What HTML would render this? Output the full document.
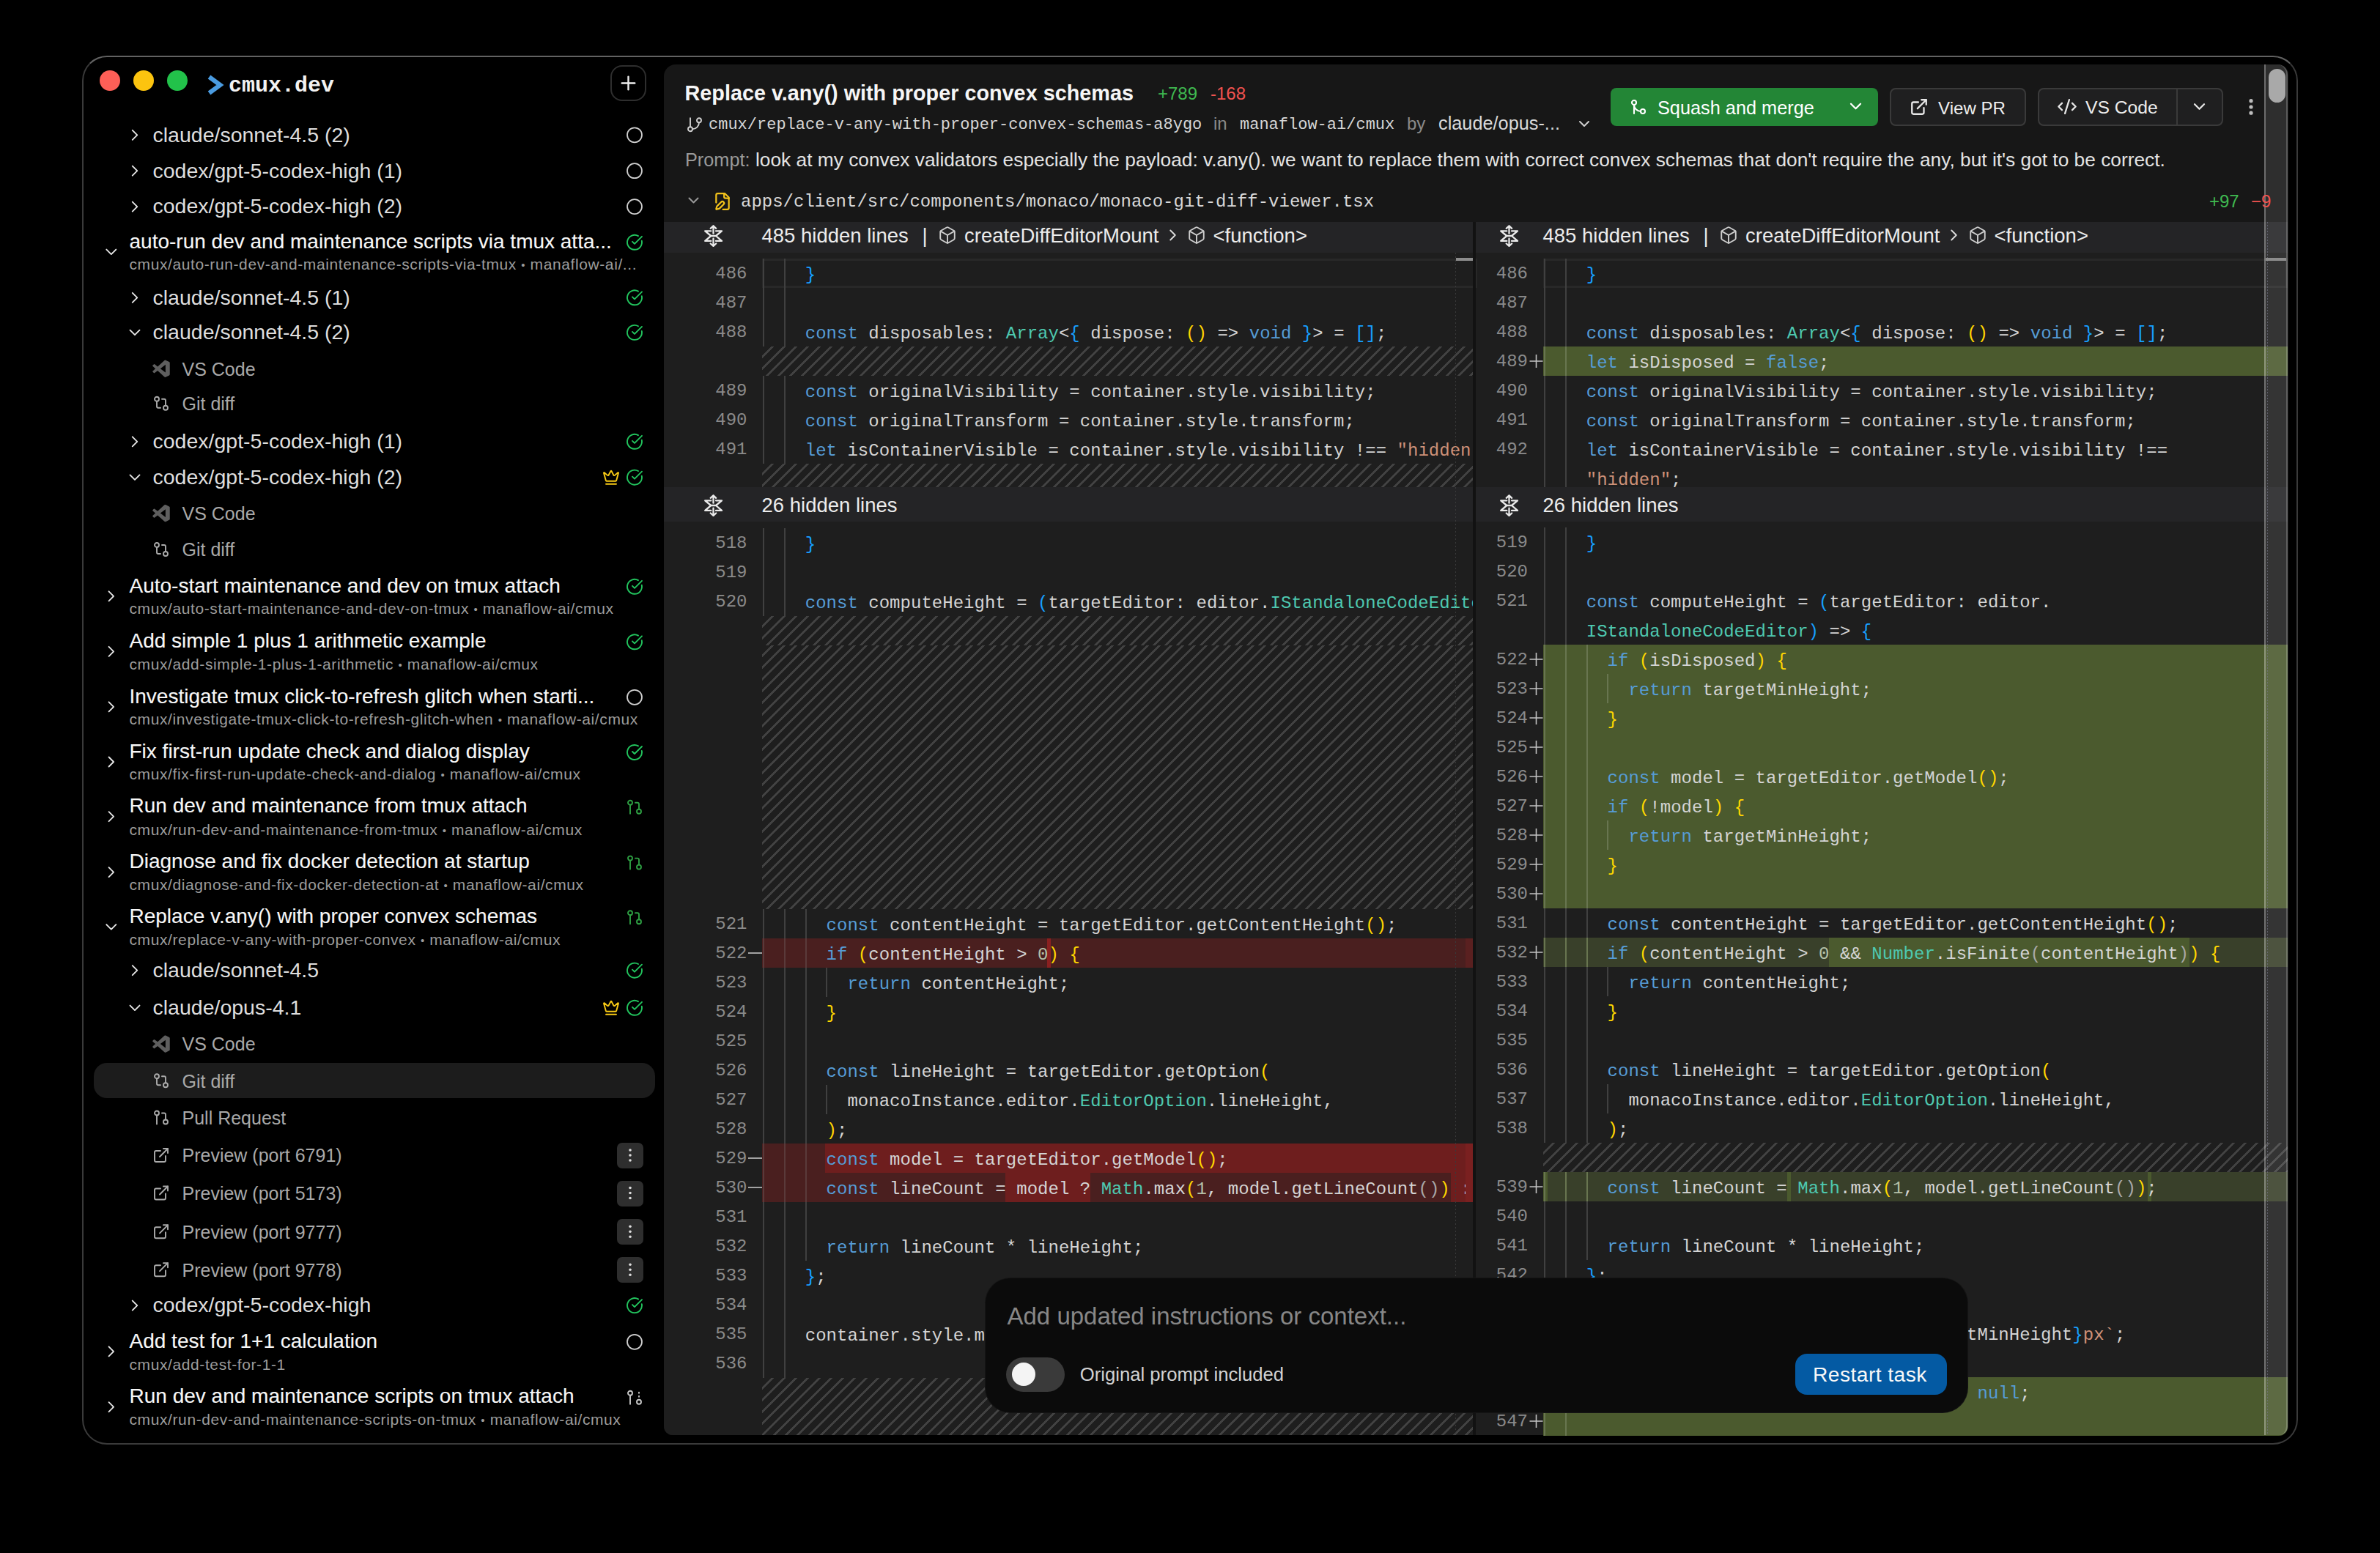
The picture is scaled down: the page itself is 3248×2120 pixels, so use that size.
<!DOCTYPE html><html><head><meta charset="utf-8"><style>
html,body{margin:0;padding:0}
body{width:3248px;height:2120px;background:#000;overflow:hidden;position:relative;font-family:"Liberation Sans",sans-serif}
.t{position:absolute;line-height:1;white-space:pre}
.b{position:absolute;box-sizing:border-box}
svg{position:absolute;overflow:visible}
</style></head><body><div class="b" style="left:112px;top:76px;width:3024px;height:1896px;border:2px solid #3a3a3a;border-top-color:#626262;border-radius:34px;background:#000"></div>
<div class="b" style="left:136px;top:96px;width:28px;height:28px;border-radius:50%;background:#fe5f57"></div>
<div class="b" style="left:182px;top:96px;width:28px;height:28px;border-radius:50%;background:#fcc40f"></div>
<div class="b" style="left:228px;top:96px;width:28px;height:28px;border-radius:50%;background:#22c24a"></div>
<svg style="left:0;top:0" width="3248" height="2120" viewBox="0 0 3248 2120"><path d="M285.5 105 L300.5 116 L285.5 127" fill="none" stroke="#4a9be0" stroke-width="6" stroke-linejoin="miter" stroke-miterlimit="4"/></svg>
<div class="t" style="left:312.0px;top:102.2px;font-size:30px;color:#f2f2f2;font-weight:700;font-family:'Liberation Mono', monospace;">cmux.dev</div>
<div class="b" style="left:833px;top:89px;width:49px;height:49px;border:2px solid #2e2e2e;border-radius:16px"></div>
<svg style="left:0;top:0" width="3248" height="2120"><g transform="translate(842.50,98.50) scale(1.2500)" fill="none" stroke="#eeeeee" stroke-width="1.920" stroke-linecap="round" stroke-linejoin="round"><path d="M5 12h14"/><path d="M12 5v14"/></g></svg>
<div class="b" style="left:128px;top:1451px;width:766px;height:48px;background:#1c1c1c;border-radius:18px"></div>
<div class="t" style="left:208.5px;top:169.6px;font-size:28.5px;color:#dedede;font-weight:400;font-family:'Liberation Sans', sans-serif;">claude/sonnet-4.5 (2)</div>
<div class="t" style="left:208.5px;top:218.5px;font-size:28.5px;color:#dedede;font-weight:400;font-family:'Liberation Sans', sans-serif;">codex/gpt-5-codex-high (1)</div>
<div class="t" style="left:208.5px;top:267.4px;font-size:28.5px;color:#dedede;font-weight:400;font-family:'Liberation Sans', sans-serif;">codex/gpt-5-codex-high (2)</div>
<div class="t" style="left:176.5px;top:315.5px;font-size:28px;color:#f7f7f7;font-weight:400;font-family:'Liberation Sans', sans-serif;-webkit-text-stroke:0.12px #f7f7f7">auto-run dev and maintenance scripts via tmux atta...</div>
<div class="t" style="left:176.5px;top:350.4px;font-size:21px;color:#9c9c9c;font-weight:400;font-family:'Liberation Sans', sans-serif;letter-spacing:0.6px">cmux/auto-run-dev-and-maintenance-scripts-via-tmux <span style="font-size:15px;vertical-align:1px">•</span> manaflow-ai/...</div>
<div class="t" style="left:208.5px;top:391.6px;font-size:28.5px;color:#dedede;font-weight:400;font-family:'Liberation Sans', sans-serif;">claude/sonnet-4.5 (1)</div>
<div class="t" style="left:208.5px;top:439.2px;font-size:28.5px;color:#dedede;font-weight:400;font-family:'Liberation Sans', sans-serif;">claude/sonnet-4.5 (2)</div>
<div class="t" style="left:248.5px;top:491.5px;font-size:25px;color:#a9a9a9;font-weight:400;font-family:'Liberation Sans', sans-serif;">VS Code</div>
<div class="t" style="left:248.5px;top:539.0px;font-size:25px;color:#a9a9a9;font-weight:400;font-family:'Liberation Sans', sans-serif;">Git diff</div>
<div class="t" style="left:208.5px;top:588.1px;font-size:28.5px;color:#dedede;font-weight:400;font-family:'Liberation Sans', sans-serif;">codex/gpt-5-codex-high (1)</div>
<div class="t" style="left:208.5px;top:637.0px;font-size:28.5px;color:#dedede;font-weight:400;font-family:'Liberation Sans', sans-serif;">codex/gpt-5-codex-high (2)</div>
<div class="t" style="left:248.5px;top:688.9px;font-size:25px;color:#a9a9a9;font-weight:400;font-family:'Liberation Sans', sans-serif;">VS Code</div>
<div class="t" style="left:248.5px;top:738.2px;font-size:25px;color:#a9a9a9;font-weight:400;font-family:'Liberation Sans', sans-serif;">Git diff</div>
<div class="t" style="left:176.5px;top:785.5px;font-size:28px;color:#f7f7f7;font-weight:400;font-family:'Liberation Sans', sans-serif;-webkit-text-stroke:0.12px #f7f7f7">Auto-start maintenance and dev on tmux attach</div>
<div class="t" style="left:176.5px;top:820.4px;font-size:21px;color:#9c9c9c;font-weight:400;font-family:'Liberation Sans', sans-serif;letter-spacing:0.6px">cmux/auto-start-maintenance-and-dev-on-tmux <span style="font-size:15px;vertical-align:1px">•</span> manaflow-ai/cmux</div>
<div class="t" style="left:176.5px;top:861.0px;font-size:28px;color:#f7f7f7;font-weight:400;font-family:'Liberation Sans', sans-serif;-webkit-text-stroke:0.12px #f7f7f7">Add simple 1 plus 1 arithmetic example</div>
<div class="t" style="left:176.5px;top:895.9px;font-size:21px;color:#9c9c9c;font-weight:400;font-family:'Liberation Sans', sans-serif;letter-spacing:0.6px">cmux/add-simple-1-plus-1-arithmetic <span style="font-size:15px;vertical-align:1px">•</span> manaflow-ai/cmux</div>
<div class="t" style="left:176.5px;top:936.5px;font-size:28px;color:#f7f7f7;font-weight:400;font-family:'Liberation Sans', sans-serif;-webkit-text-stroke:0.12px #f7f7f7">Investigate tmux click-to-refresh glitch when starti...</div>
<div class="t" style="left:176.5px;top:971.4px;font-size:21px;color:#9c9c9c;font-weight:400;font-family:'Liberation Sans', sans-serif;letter-spacing:0.6px">cmux/investigate-tmux-click-to-refresh-glitch-when <span style="font-size:15px;vertical-align:1px">•</span> manaflow-ai/cmux</div>
<div class="t" style="left:176.5px;top:1011.7px;font-size:28px;color:#f7f7f7;font-weight:400;font-family:'Liberation Sans', sans-serif;-webkit-text-stroke:0.12px #f7f7f7">Fix first-run update check and dialog display</div>
<div class="t" style="left:176.5px;top:1046.2px;font-size:21px;color:#9c9c9c;font-weight:400;font-family:'Liberation Sans', sans-serif;letter-spacing:0.6px">cmux/fix-first-run-update-check-and-dialog <span style="font-size:15px;vertical-align:1px">•</span> manaflow-ai/cmux</div>
<div class="t" style="left:176.5px;top:1086.4px;font-size:28px;color:#f7f7f7;font-weight:400;font-family:'Liberation Sans', sans-serif;-webkit-text-stroke:0.12px #f7f7f7">Run dev and maintenance from tmux attach</div>
<div class="t" style="left:176.5px;top:1121.7px;font-size:21px;color:#9c9c9c;font-weight:400;font-family:'Liberation Sans', sans-serif;letter-spacing:0.6px">cmux/run-dev-and-maintenance-from-tmux <span style="font-size:15px;vertical-align:1px">•</span> manaflow-ai/cmux</div>
<div class="t" style="left:176.5px;top:1162.3px;font-size:28px;color:#f7f7f7;font-weight:400;font-family:'Liberation Sans', sans-serif;-webkit-text-stroke:0.12px #f7f7f7">Diagnose and fix docker detection at startup</div>
<div class="t" style="left:176.5px;top:1196.9px;font-size:21px;color:#9c9c9c;font-weight:400;font-family:'Liberation Sans', sans-serif;letter-spacing:0.6px">cmux/diagnose-and-fix-docker-detection-at <span style="font-size:15px;vertical-align:1px">•</span> manaflow-ai/cmux</div>
<div class="t" style="left:176.5px;top:1237.0px;font-size:28px;color:#f7f7f7;font-weight:400;font-family:'Liberation Sans', sans-serif;-webkit-text-stroke:0.12px #f7f7f7">Replace v.any() with proper convex schemas</div>
<div class="t" style="left:176.5px;top:1272.0px;font-size:21px;color:#9c9c9c;font-weight:400;font-family:'Liberation Sans', sans-serif;letter-spacing:0.6px">cmux/replace-v-any-with-proper-convex <span style="font-size:15px;vertical-align:1px">•</span> manaflow-ai/cmux</div>
<div class="t" style="left:208.5px;top:1310.0px;font-size:28.5px;color:#dedede;font-weight:400;font-family:'Liberation Sans', sans-serif;">claude/sonnet-4.5</div>
<div class="t" style="left:208.5px;top:1361.1px;font-size:28.5px;color:#dedede;font-weight:400;font-family:'Liberation Sans', sans-serif;">claude/opus-4.1</div>
<div class="t" style="left:248.5px;top:1413.4px;font-size:25px;color:#a9a9a9;font-weight:400;font-family:'Liberation Sans', sans-serif;">VS Code</div>
<div class="t" style="left:248.5px;top:1463.5px;font-size:25px;color:#a9a9a9;font-weight:400;font-family:'Liberation Sans', sans-serif;">Git diff</div>
<div class="t" style="left:248.5px;top:1513.8px;font-size:25px;color:#a9a9a9;font-weight:400;font-family:'Liberation Sans', sans-serif;">Pull Request</div>
<div class="t" style="left:248.5px;top:1565.2px;font-size:25px;color:#a9a9a9;font-weight:400;font-family:'Liberation Sans', sans-serif;">Preview (port 6791)</div>
<div class="b" style="left:842px;top:1560.0px;width:36px;height:35.0px;background:#2e2e2e;border-radius:7px"></div>
<div class="t" style="left:248.5px;top:1616.8px;font-size:25px;color:#a9a9a9;font-weight:400;font-family:'Liberation Sans', sans-serif;">Preview (port 5173)</div>
<div class="b" style="left:842px;top:1611.5px;width:36px;height:35.0px;background:#2e2e2e;border-radius:7px"></div>
<div class="t" style="left:248.5px;top:1669.5px;font-size:25px;color:#a9a9a9;font-weight:400;font-family:'Liberation Sans', sans-serif;">Preview (port 9777)</div>
<div class="b" style="left:842px;top:1664.3px;width:36px;height:35.0px;background:#2e2e2e;border-radius:7px"></div>
<div class="t" style="left:248.5px;top:1721.5px;font-size:25px;color:#a9a9a9;font-weight:400;font-family:'Liberation Sans', sans-serif;">Preview (port 9778)</div>
<div class="b" style="left:842px;top:1716.2px;width:36px;height:35.0px;background:#2e2e2e;border-radius:7px"></div>
<div class="t" style="left:208.5px;top:1767.4px;font-size:28.5px;color:#dedede;font-weight:400;font-family:'Liberation Sans', sans-serif;">codex/gpt-5-codex-high</div>
<div class="t" style="left:176.5px;top:1816.5px;font-size:28px;color:#f7f7f7;font-weight:400;font-family:'Liberation Sans', sans-serif;-webkit-text-stroke:0.12px #f7f7f7">Add test for 1+1 calculation</div>
<div class="t" style="left:176.5px;top:1851.5px;font-size:21px;color:#9c9c9c;font-weight:400;font-family:'Liberation Sans', sans-serif;letter-spacing:0.6px">cmux/add-test-for-1-1</div>
<div class="t" style="left:176.5px;top:1892.4px;font-size:28px;color:#f7f7f7;font-weight:400;font-family:'Liberation Sans', sans-serif;-webkit-text-stroke:0.12px #f7f7f7">Run dev and maintenance scripts on tmux attach</div>
<div class="t" style="left:176.5px;top:1926.9px;font-size:21px;color:#9c9c9c;font-weight:400;font-family:'Liberation Sans', sans-serif;letter-spacing:0.6px">cmux/run-dev-and-maintenance-scripts-on-tmux <span style="font-size:15px;vertical-align:1px">•</span> manaflow-ai/cmux</div>
<svg style="left:0;top:0" width="3248" height="2120"><g transform="translate(171.00,171.30) scale(1.0833)" fill="none" stroke="#e6e6e6" stroke-width="1.754" stroke-linecap="round" stroke-linejoin="round"><path d="m9 18 6-6-6-6"/></g><g transform="translate(854.00,172.30) scale(1.0000)" fill="none" stroke="#d0d0d0" stroke-width="1.800" stroke-linecap="round" stroke-linejoin="round"><circle cx="12" cy="12" r="10"/></g><g transform="translate(171.00,220.20) scale(1.0833)" fill="none" stroke="#e6e6e6" stroke-width="1.754" stroke-linecap="round" stroke-linejoin="round"><path d="m9 18 6-6-6-6"/></g><g transform="translate(854.00,221.20) scale(1.0000)" fill="none" stroke="#d0d0d0" stroke-width="1.800" stroke-linecap="round" stroke-linejoin="round"><circle cx="12" cy="12" r="10"/></g><g transform="translate(171.00,269.10) scale(1.0833)" fill="none" stroke="#e6e6e6" stroke-width="1.754" stroke-linecap="round" stroke-linejoin="round"><path d="m9 18 6-6-6-6"/></g><g transform="translate(854.00,270.10) scale(1.0000)" fill="none" stroke="#d0d0d0" stroke-width="1.800" stroke-linecap="round" stroke-linejoin="round"><circle cx="12" cy="12" r="10"/></g><g transform="translate(138.80,330.80) scale(1.0833)" fill="none" stroke="#e6e6e6" stroke-width="1.754" stroke-linecap="round" stroke-linejoin="round"><path d="m6 9 6 6 6-6"/></g><g transform="translate(854.00,318.80) scale(1.0000)" fill="none" stroke="#22c55e" stroke-width="1.900" stroke-linecap="round" stroke-linejoin="round"><path d="M21.801 10A10 10 0 1 1 17 3.335"/><path d="m9 11 3 3L22 4"/></g><g transform="translate(171.00,393.30) scale(1.0833)" fill="none" stroke="#e6e6e6" stroke-width="1.754" stroke-linecap="round" stroke-linejoin="round"><path d="m9 18 6-6-6-6"/></g><g transform="translate(854.00,394.30) scale(1.0000)" fill="none" stroke="#22c55e" stroke-width="1.900" stroke-linecap="round" stroke-linejoin="round"><path d="M21.801 10A10 10 0 1 1 17 3.335"/><path d="m9 11 3 3L22 4"/></g><g transform="translate(171.00,440.90) scale(1.0833)" fill="none" stroke="#e6e6e6" stroke-width="1.754" stroke-linecap="round" stroke-linejoin="round"><path d="m6 9 6 6 6-6"/></g><g transform="translate(854.00,441.90) scale(1.0000)" fill="none" stroke="#22c55e" stroke-width="1.900" stroke-linecap="round" stroke-linejoin="round"><path d="M21.801 10A10 10 0 1 1 17 3.335"/><path d="m9 11 3 3L22 4"/></g><g transform="translate(208.25,491.45) scale(0.235)"><path fill="#5e5e5e" d="M96.46 10.8L75.86.87a6.23 6.23 0 0 0-7.1 1.2L29.35 38.04 12.19 25.01a4.16 4.16 0 0 0-5.32.24l-5.5 5a4.17 4.17 0 0 0 0 6.16L16.25 50 1.37 63.59a4.17 4.17 0 0 0 0 6.16l5.5 5a4.16 4.16 0 0 0 5.32.24l17.16-13.03 39.41 35.97a6.22 6.22 0 0 0 7.1 1.2l20.6-9.92A6.25 6.25 0 0 0 100 83.56V16.44a6.25 6.25 0 0 0-3.54-5.64zM75.02 72.7L45.11 50l29.91-22.7z"/></g><g transform="translate(208.00,538.70) scale(1.0000)" fill="none" stroke="#ababab" stroke-width="1.900" stroke-linecap="round" stroke-linejoin="round"><circle cx="18" cy="18" r="3"/><circle cx="6" cy="6" r="3"/><path d="M13 6h3a2 2 0 0 1 2 2v7"/><path d="M11 18H8a2 2 0 0 1-2-2V9"/></g><g transform="translate(171.00,589.80) scale(1.0833)" fill="none" stroke="#e6e6e6" stroke-width="1.754" stroke-linecap="round" stroke-linejoin="round"><path d="m9 18 6-6-6-6"/></g><g transform="translate(854.00,590.80) scale(1.0000)" fill="none" stroke="#22c55e" stroke-width="1.900" stroke-linecap="round" stroke-linejoin="round"><path d="M21.801 10A10 10 0 1 1 17 3.335"/><path d="m9 11 3 3L22 4"/></g><g transform="translate(171.00,638.70) scale(1.0833)" fill="none" stroke="#e6e6e6" stroke-width="1.754" stroke-linecap="round" stroke-linejoin="round"><path d="m6 9 6 6 6-6"/></g><g transform="translate(854.00,639.70) scale(1.0000)" fill="none" stroke="#22c55e" stroke-width="1.900" stroke-linecap="round" stroke-linejoin="round"><path d="M21.801 10A10 10 0 1 1 17 3.335"/><path d="m9 11 3 3L22 4"/></g><g transform="translate(822.00,639.70) scale(1.0000)" fill="none" stroke="#facc15" stroke-width="1.900" stroke-linecap="round" stroke-linejoin="round"><path d="M11.562 3.266a.5.5 0 0 1 .876 0L15.39 8.87a1 1 0 0 0 1.516.294L21.183 5.5a.5.5 0 0 1 .798.519l-2.834 10.246a1 1 0 0 1-.956.734H5.81a1 1 0 0 1-.957-.734L2.02 6.02a.5.5 0 0 1 .798-.519l4.276 3.664a1 1 0 0 0 1.516-.294z"/><path d="M5 21h14"/></g><g transform="translate(208.25,688.85) scale(0.235)"><path fill="#5e5e5e" d="M96.46 10.8L75.86.87a6.23 6.23 0 0 0-7.1 1.2L29.35 38.04 12.19 25.01a4.16 4.16 0 0 0-5.32.24l-5.5 5a4.17 4.17 0 0 0 0 6.16L16.25 50 1.37 63.59a4.17 4.17 0 0 0 0 6.16l5.5 5a4.16 4.16 0 0 0 5.32.24l17.16-13.03 39.41 35.97a6.22 6.22 0 0 0 7.1 1.2l20.6-9.92A6.25 6.25 0 0 0 100 83.56V16.44a6.25 6.25 0 0 0-3.54-5.64zM75.02 72.7L45.11 50l29.91-22.7z"/></g><g transform="translate(208.00,738.00) scale(1.0000)" fill="none" stroke="#ababab" stroke-width="1.900" stroke-linecap="round" stroke-linejoin="round"><circle cx="18" cy="18" r="3"/><circle cx="6" cy="6" r="3"/><path d="M13 6h3a2 2 0 0 1 2 2v7"/><path d="M11 18H8a2 2 0 0 1-2-2V9"/></g><g transform="translate(138.80,800.80) scale(1.0833)" fill="none" stroke="#e6e6e6" stroke-width="1.754" stroke-linecap="round" stroke-linejoin="round"><path d="m9 18 6-6-6-6"/></g><g transform="translate(854.00,788.80) scale(1.0000)" fill="none" stroke="#22c55e" stroke-width="1.900" stroke-linecap="round" stroke-linejoin="round"><path d="M21.801 10A10 10 0 1 1 17 3.335"/><path d="m9 11 3 3L22 4"/></g><g transform="translate(138.80,876.30) scale(1.0833)" fill="none" stroke="#e6e6e6" stroke-width="1.754" stroke-linecap="round" stroke-linejoin="round"><path d="m9 18 6-6-6-6"/></g><g transform="translate(854.00,864.30) scale(1.0000)" fill="none" stroke="#22c55e" stroke-width="1.900" stroke-linecap="round" stroke-linejoin="round"><path d="M21.801 10A10 10 0 1 1 17 3.335"/><path d="m9 11 3 3L22 4"/></g><g transform="translate(138.80,951.80) scale(1.0833)" fill="none" stroke="#e6e6e6" stroke-width="1.754" stroke-linecap="round" stroke-linejoin="round"><path d="m9 18 6-6-6-6"/></g><g transform="translate(854.00,939.80) scale(1.0000)" fill="none" stroke="#d0d0d0" stroke-width="1.800" stroke-linecap="round" stroke-linejoin="round"><circle cx="12" cy="12" r="10"/></g><g transform="translate(138.80,1027.00) scale(1.0833)" fill="none" stroke="#e6e6e6" stroke-width="1.754" stroke-linecap="round" stroke-linejoin="round"><path d="m9 18 6-6-6-6"/></g><g transform="translate(854.00,1015.00) scale(1.0000)" fill="none" stroke="#22c55e" stroke-width="1.900" stroke-linecap="round" stroke-linejoin="round"><path d="M21.801 10A10 10 0 1 1 17 3.335"/><path d="m9 11 3 3L22 4"/></g><g transform="translate(138.80,1101.70) scale(1.0833)" fill="none" stroke="#e6e6e6" stroke-width="1.754" stroke-linecap="round" stroke-linejoin="round"><path d="m9 18 6-6-6-6"/></g><g transform="translate(854.00,1089.70) scale(1.0000)" fill="none" stroke="#2ea043" stroke-width="1.900" stroke-linecap="round" stroke-linejoin="round"><circle cx="18" cy="18" r="3"/><circle cx="6" cy="6" r="3"/><path d="M13 6h3a2 2 0 0 1 2 2v7"/><line x1="6" x2="6" y1="9" y2="21"/></g><g transform="translate(138.80,1177.60) scale(1.0833)" fill="none" stroke="#e6e6e6" stroke-width="1.754" stroke-linecap="round" stroke-linejoin="round"><path d="m9 18 6-6-6-6"/></g><g transform="translate(854.00,1165.60) scale(1.0000)" fill="none" stroke="#2ea043" stroke-width="1.900" stroke-linecap="round" stroke-linejoin="round"><circle cx="18" cy="18" r="3"/><circle cx="6" cy="6" r="3"/><path d="M13 6h3a2 2 0 0 1 2 2v7"/><line x1="6" x2="6" y1="9" y2="21"/></g><g transform="translate(138.80,1252.30) scale(1.0833)" fill="none" stroke="#e6e6e6" stroke-width="1.754" stroke-linecap="round" stroke-linejoin="round"><path d="m6 9 6 6 6-6"/></g><g transform="translate(854.00,1240.30) scale(1.0000)" fill="none" stroke="#2ea043" stroke-width="1.900" stroke-linecap="round" stroke-linejoin="round"><circle cx="18" cy="18" r="3"/><circle cx="6" cy="6" r="3"/><path d="M13 6h3a2 2 0 0 1 2 2v7"/><line x1="6" x2="6" y1="9" y2="21"/></g><g transform="translate(171.00,1311.70) scale(1.0833)" fill="none" stroke="#e6e6e6" stroke-width="1.754" stroke-linecap="round" stroke-linejoin="round"><path d="m9 18 6-6-6-6"/></g><g transform="translate(854.00,1312.70) scale(1.0000)" fill="none" stroke="#22c55e" stroke-width="1.900" stroke-linecap="round" stroke-linejoin="round"><path d="M21.801 10A10 10 0 1 1 17 3.335"/><path d="m9 11 3 3L22 4"/></g><g transform="translate(171.00,1362.80) scale(1.0833)" fill="none" stroke="#e6e6e6" stroke-width="1.754" stroke-linecap="round" stroke-linejoin="round"><path d="m6 9 6 6 6-6"/></g><g transform="translate(854.00,1363.80) scale(1.0000)" fill="none" stroke="#22c55e" stroke-width="1.900" stroke-linecap="round" stroke-linejoin="round"><path d="M21.801 10A10 10 0 1 1 17 3.335"/><path d="m9 11 3 3L22 4"/></g><g transform="translate(822.00,1363.80) scale(1.0000)" fill="none" stroke="#facc15" stroke-width="1.900" stroke-linecap="round" stroke-linejoin="round"><path d="M11.562 3.266a.5.5 0 0 1 .876 0L15.39 8.87a1 1 0 0 0 1.516.294L21.183 5.5a.5.5 0 0 1 .798.519l-2.834 10.246a1 1 0 0 1-.956.734H5.81a1 1 0 0 1-.957-.734L2.02 6.02a.5.5 0 0 1 .798-.519l4.276 3.664a1 1 0 0 0 1.516-.294z"/><path d="M5 21h14"/></g><g transform="translate(208.25,1413.35) scale(0.235)"><path fill="#5e5e5e" d="M96.46 10.8L75.86.87a6.23 6.23 0 0 0-7.1 1.2L29.35 38.04 12.19 25.01a4.16 4.16 0 0 0-5.32.24l-5.5 5a4.17 4.17 0 0 0 0 6.16L16.25 50 1.37 63.59a4.17 4.17 0 0 0 0 6.16l5.5 5a4.16 4.16 0 0 0 5.32.24l17.16-13.03 39.41 35.97a6.22 6.22 0 0 0 7.1 1.2l20.6-9.92A6.25 6.25 0 0 0 100 83.56V16.44a6.25 6.25 0 0 0-3.54-5.64zM75.02 72.7L45.11 50l29.91-22.7z"/></g><g transform="translate(208.00,1463.30) scale(1.0000)" fill="none" stroke="#ababab" stroke-width="1.900" stroke-linecap="round" stroke-linejoin="round"><circle cx="18" cy="18" r="3"/><circle cx="6" cy="6" r="3"/><path d="M13 6h3a2 2 0 0 1 2 2v7"/><path d="M11 18H8a2 2 0 0 1-2-2V9"/></g><g transform="translate(208.00,1513.50) scale(1.0000)" fill="none" stroke="#ababab" stroke-width="1.900" stroke-linecap="round" stroke-linejoin="round"><circle cx="18" cy="18" r="3"/><circle cx="6" cy="6" r="3"/><path d="M13 6h3a2 2 0 0 1 2 2v7"/><line x1="6" x2="6" y1="9" y2="21"/></g><g transform="translate(208.00,1565.00) scale(1.0000)" fill="none" stroke="#ababab" stroke-width="1.900" stroke-linecap="round" stroke-linejoin="round"><path d="M15 3h6v6"/><path d="M10 14 21 3"/><path d="M18 13v6a2 2 0 0 1-2 2H5a2 2 0 0 1-2-2V8a2 2 0 0 1 2-2h6"/></g><circle cx="860" cy="1570.0" r="1.8" fill="#dddddd"/><circle cx="860" cy="1577.0" r="1.8" fill="#dddddd"/><circle cx="860" cy="1584.0" r="1.8" fill="#dddddd"/><g transform="translate(208.00,1616.50) scale(1.0000)" fill="none" stroke="#ababab" stroke-width="1.900" stroke-linecap="round" stroke-linejoin="round"><path d="M15 3h6v6"/><path d="M10 14 21 3"/><path d="M18 13v6a2 2 0 0 1-2 2H5a2 2 0 0 1-2-2V8a2 2 0 0 1 2-2h6"/></g><circle cx="860" cy="1621.5" r="1.8" fill="#dddddd"/><circle cx="860" cy="1628.5" r="1.8" fill="#dddddd"/><circle cx="860" cy="1635.5" r="1.8" fill="#dddddd"/><g transform="translate(208.00,1669.30) scale(1.0000)" fill="none" stroke="#ababab" stroke-width="1.900" stroke-linecap="round" stroke-linejoin="round"><path d="M15 3h6v6"/><path d="M10 14 21 3"/><path d="M18 13v6a2 2 0 0 1-2 2H5a2 2 0 0 1-2-2V8a2 2 0 0 1 2-2h6"/></g><circle cx="860" cy="1674.3" r="1.8" fill="#dddddd"/><circle cx="860" cy="1681.3" r="1.8" fill="#dddddd"/><circle cx="860" cy="1688.3" r="1.8" fill="#dddddd"/><g transform="translate(208.00,1721.20) scale(1.0000)" fill="none" stroke="#ababab" stroke-width="1.900" stroke-linecap="round" stroke-linejoin="round"><path d="M15 3h6v6"/><path d="M10 14 21 3"/><path d="M18 13v6a2 2 0 0 1-2 2H5a2 2 0 0 1-2-2V8a2 2 0 0 1 2-2h6"/></g><circle cx="860" cy="1726.2" r="1.8" fill="#dddddd"/><circle cx="860" cy="1733.2" r="1.8" fill="#dddddd"/><circle cx="860" cy="1740.2" r="1.8" fill="#dddddd"/><g transform="translate(171.00,1769.10) scale(1.0833)" fill="none" stroke="#e6e6e6" stroke-width="1.754" stroke-linecap="round" stroke-linejoin="round"><path d="m9 18 6-6-6-6"/></g><g transform="translate(854.00,1770.10) scale(1.0000)" fill="none" stroke="#22c55e" stroke-width="1.900" stroke-linecap="round" stroke-linejoin="round"><path d="M21.801 10A10 10 0 1 1 17 3.335"/><path d="m9 11 3 3L22 4"/></g><g transform="translate(138.80,1831.80) scale(1.0833)" fill="none" stroke="#e6e6e6" stroke-width="1.754" stroke-linecap="round" stroke-linejoin="round"><path d="m9 18 6-6-6-6"/></g><g transform="translate(854.00,1819.80) scale(1.0000)" fill="none" stroke="#d0d0d0" stroke-width="1.800" stroke-linecap="round" stroke-linejoin="round"><circle cx="12" cy="12" r="10"/></g><g transform="translate(138.80,1907.70) scale(1.0833)" fill="none" stroke="#e6e6e6" stroke-width="1.754" stroke-linecap="round" stroke-linejoin="round"><path d="m9 18 6-6-6-6"/></g><g transform="translate(854.00,1895.70) scale(1.0000)" fill="none" stroke="#c8c8c8" stroke-width="1.900" stroke-linecap="round" stroke-linejoin="round"><circle cx="18" cy="18" r="3"/><circle cx="6" cy="6" r="3"/><path d="M18 6V5"/><path d="M18 11v-1"/><line x1="6" x2="6" y1="9" y2="21"/></g></svg>
<div class="b" style="left:906px;top:88px;width:2217px;height:1871px;background:#171717;border-radius:16px 14px 12px 12px"></div>
<div class="b" style="left:3090px;top:88px;width:32px;height:215px;background:rgba(255,255,255,0.1);border-left:2px solid rgba(255,255,255,0.3);border-right:2px solid rgba(255,255,255,0.22);border-top-right-radius:14px"></div>
<div class="b" style="left:3096px;top:94px;width:23px;height:46px;background:#a9a9a9;border-radius:12px"></div>
<div class="t" style="left:934.5px;top:112.5px;font-size:28.8px;color:#f6f6f6;font-weight:700;font-family:'Liberation Sans', sans-serif;">Replace v.any() with proper convex schemas</div>
<div class="t" style="left:1580.0px;top:115.6px;font-size:24px;color:#3fb950;font-weight:400;font-family:'Liberation Sans', sans-serif;">+789</div>
<div class="t" style="left:1652.0px;top:115.6px;font-size:24px;color:#f0524f;font-weight:400;font-family:'Liberation Sans', sans-serif;">-168</div>
<div class="t" style="left:967.0px;top:160.3px;font-size:22px;color:#d6d6d6;font-weight:400;font-family:'Liberation Mono', monospace;">cmux/replace-v-any-with-proper-convex-schemas-a8ygo</div>
<div class="t" style="left:1656.0px;top:156.6px;font-size:24px;color:#8a8a8a;font-weight:400;font-family:'Liberation Sans', sans-serif;">in</div>
<div class="t" style="left:1692.0px;top:160.3px;font-size:22px;color:#d6d6d6;font-weight:400;font-family:'Liberation Mono', monospace;">manaflow-ai/cmux</div>
<div class="t" style="left:1920.0px;top:156.6px;font-size:24px;color:#8a8a8a;font-weight:400;font-family:'Liberation Sans', sans-serif;">by</div>
<div class="t" style="left:1963.0px;top:155.5px;font-size:25.3px;color:#dadada;font-weight:400;font-family:'Liberation Sans', sans-serif;">claude/opus-...</div>
<div class="t" style="left:935.0px;top:205.5px;font-size:25.3px;color:#9a9a9a;font-weight:400;font-family:'Liberation Sans', sans-serif;">Prompt:</div>
<div class="t" style="left:1031.0px;top:204.6px;font-size:26.3px;color:#e4e4e4;font-weight:400;font-family:'Liberation Sans', sans-serif;">look at my convex validators especially the payload: v.any(). we want to replace them with correct convex schemas that don&#x27;t require the any, but it&#x27;s got to be correct.</div>
<div class="t" style="left:1011.0px;top:263.8px;font-size:24px;color:#d8d8d8;font-weight:400;font-family:'Liberation Mono', monospace;">apps/client/src/components/monaco/monaco-git-diff-viewer.tsx</div>
<div class="t" style="left:3015.0px;top:262.6px;font-size:24px;color:#3fb950;font-weight:400;font-family:'Liberation Sans', sans-serif;">+97</div>
<div class="t" style="left:3072.0px;top:262.6px;font-size:24px;color:#f0524f;font-weight:400;font-family:'Liberation Sans', sans-serif;">−9</div>
<div class="b" style="left:2198px;top:120px;width:365px;height:52px;background:#238636;border-radius:8px"></div>
<div class="t" style="left:2262.0px;top:134.5px;font-size:25.3px;color:#ffffff;font-weight:400;font-family:'Liberation Sans', sans-serif;">Squash and merge</div>
<div class="b" style="left:2579px;top:120px;width:186px;height:52px;border:2px solid #3a3a3a;background:#1f1f20;border-radius:8px"></div>
<div class="t" style="left:2645.0px;top:135.5px;font-size:24.1px;color:#ededed;font-weight:400;font-family:'Liberation Sans', sans-serif;">View PR</div>
<div class="b" style="left:2781px;top:120px;width:253px;height:52px;border:2px solid #3a3a3a;background:#1f1f20;border-radius:8px"></div>
<div class="b" style="left:2970px;top:121px;width:2px;height:50px;background:#3a3a3a"></div>
<div class="t" style="left:2846.0px;top:135.0px;font-size:24.7px;color:#ededed;font-weight:400;font-family:'Liberation Sans', sans-serif;">VS Code</div>
<div class="b" style="left:906px;top:345px;width:1104px;height:1614px;background:#1e1e1e;border-bottom-left-radius:12px"></div>
<div class="b" style="left:2014px;top:345px;width:1108px;height:1614px;background:#1e1e1e;border-bottom-right-radius:12px"></div>
<div class="b" style="left:1040px;top:473px;width:974px;height:40px;background:repeating-linear-gradient(135deg,#424242 0px,#424242 0.4px,#1e1e1e 0.4px,#1e1e1e 8.8px,#424242 8.8px,#424242 11.3137px)"></div>
<div class="b" style="left:1040px;top:633px;width:974px;height:32px;background:repeating-linear-gradient(135deg,#424242 0px,#424242 0.4px,#1e1e1e 0.4px,#1e1e1e 8.8px,#424242 8.8px,#424242 11.3137px)"></div>
<div class="b" style="left:1040px;top:841px;width:974px;height:40px;background:repeating-linear-gradient(135deg,#424242 0px,#424242 0.4px,#1e1e1e 0.4px,#1e1e1e 8.8px,#424242 8.8px,#424242 11.3137px)"></div>
<div class="b" style="left:1040px;top:881px;width:974px;height:360px;background:repeating-linear-gradient(135deg,#424242 0px,#424242 0.4px,#1e1e1e 0.4px,#1e1e1e 8.8px,#424242 8.8px,#424242 11.3137px)"></div>
<div class="b" style="left:1040px;top:1881px;width:974px;height:78px;background:repeating-linear-gradient(135deg,#424242 0px,#424242 0.4px,#1e1e1e 0.4px,#1e1e1e 8.8px,#424242 8.8px,#424242 11.3137px)"></div>
<div class="b" style="left:2106px;top:1560px;width:1016px;height:40px;background:repeating-linear-gradient(135deg,#424242 0px,#424242 0.4px,#1e1e1e 0.4px,#1e1e1e 8.8px,#424242 8.8px,#424242 11.3137px)"></div>
<div class="b" style="left:1040px;top:1281px;width:970px;height:40px;background:#4a1f1f"></div>
<div class="b" style="left:1040px;top:1561px;width:970px;height:40px;background:#4a1f1f"></div>
<div class="b" style="left:1040px;top:1601px;width:970px;height:40px;background:#4a1f1f"></div>
<div class="b" style="left:1126px;top:1561px;width:884px;height:40px;background:#6e1e1e"></div>
<div class="b" style="left:1372px;top:1601px;width:116px;height:40px;background:#6e1e1e"></div>
<div class="b" style="left:1980px;top:1601px;width:30px;height:40px;background:#6e1e1e"></div>
<div class="b" style="left:1429px;top:1281px;width:5px;height:40px;background:#8a2020"></div>
<div class="b" style="left:2106px;top:473px;width:1016px;height:40px;background:#4b5a2e"></div>
<div class="b" style="left:2106px;top:880px;width:1016px;height:40px;background:#4b5a2e"></div>
<div class="b" style="left:2106px;top:920px;width:1016px;height:40px;background:#4b5a2e"></div>
<div class="b" style="left:2106px;top:960px;width:1016px;height:40px;background:#4b5a2e"></div>
<div class="b" style="left:2106px;top:1000px;width:1016px;height:40px;background:#4b5a2e"></div>
<div class="b" style="left:2106px;top:1040px;width:1016px;height:40px;background:#4b5a2e"></div>
<div class="b" style="left:2106px;top:1080px;width:1016px;height:40px;background:#4b5a2e"></div>
<div class="b" style="left:2106px;top:1120px;width:1016px;height:40px;background:#4b5a2e"></div>
<div class="b" style="left:2106px;top:1160px;width:1016px;height:40px;background:#4b5a2e"></div>
<div class="b" style="left:2106px;top:1200px;width:1016px;height:40px;background:#4b5a2e"></div>
<div class="b" style="left:2106px;top:1280px;width:1016px;height:40px;background:#39402a"></div>
<div class="b" style="left:2106px;top:1600px;width:1016px;height:40px;background:#39402a"></div>
<div class="b" style="left:2106px;top:1880px;width:1016px;height:40px;background:#4b5a2e"></div>
<div class="b" style="left:2106px;top:1920px;width:1016px;height:40px;background:#4b5a2e;border-bottom-right-radius:12px"></div>
<div class="b" style="left:2496px;top:1280px;width:492px;height:40px;background:#4b5a2e"></div>
<div class="b" style="left:2106px;top:1600px;width:6px;height:40px;background:#4b5a2e"></div>
<div class="b" style="left:2439px;top:1600px;width:5px;height:40px;background:#4b5a2e"></div>
<div class="b" style="left:2931px;top:1600px;width:5px;height:40px;background:#4b5a2e"></div>
<div class="b" style="left:1040px;top:353px;width:976px;height:40px;border:3px solid #282828"></div>
<div class="b" style="left:2106px;top:353px;width:1016px;height:40px;border:3px solid #282828"></div>
<div class="b" style="left:1041px;top:353px;width:2px;height:40px;background:#404040"></div>
<div class="b" style="left:1070px;top:353px;width:2px;height:40px;background:#404040"></div>
<div class="t" style="left:959.5px;width:60px;text-align:right;top:362.3px;font-size:24px;color:#8a8a8a;font-family:'Liberation Mono', monospace">486</div>
<div class="t" style="left:1041.0px;top:363.5px;font-size:24px;color:#d4d4d4;font-weight:400;font-family:'Liberation Mono', monospace;width:969px;overflow:hidden;letter-spacing:0.02px;">    <span style="color:#179fff">}</span></div>
<div class="b" style="left:1041px;top:393px;width:2px;height:40px;background:#404040"></div>
<div class="b" style="left:1070px;top:393px;width:2px;height:40px;background:#404040"></div>
<div class="t" style="left:959.5px;width:60px;text-align:right;top:402.3px;font-size:24px;color:#8a8a8a;font-family:'Liberation Mono', monospace">487</div>
<div class="b" style="left:1041px;top:433px;width:2px;height:40px;background:#404040"></div>
<div class="b" style="left:1070px;top:433px;width:2px;height:40px;background:#404040"></div>
<div class="t" style="left:959.5px;width:60px;text-align:right;top:442.3px;font-size:24px;color:#8a8a8a;font-family:'Liberation Mono', monospace">488</div>
<div class="t" style="left:1041.0px;top:443.5px;font-size:24px;color:#d4d4d4;font-weight:400;font-family:'Liberation Mono', monospace;width:969px;overflow:hidden;letter-spacing:0.02px;">    <span style="color:#569cd6">const</span> <span style="color:#d4d4d4">disposables</span><span style="color:#d4d4d4">:</span> <span style="color:#4ec9b0">Array</span><span style="color:#d4d4d4">&lt;</span><span style="color:#179fff">{</span> <span style="color:#d4d4d4">dispose</span><span style="color:#d4d4d4">:</span> <span style="color:#ffd700">(</span><span style="color:#ffd700">)</span> <span style="color:#d4d4d4">=</span><span style="color:#d4d4d4">&gt;</span> <span style="color:#569cd6">void</span> <span style="color:#179fff">}</span><span style="color:#d4d4d4">&gt;</span> <span style="color:#d4d4d4">=</span> <span style="color:#179fff">[</span><span style="color:#179fff">]</span><span style="color:#d4d4d4">;</span></div>
<div class="b" style="left:1041px;top:513px;width:2px;height:40px;background:#404040"></div>
<div class="b" style="left:1070px;top:513px;width:2px;height:40px;background:#404040"></div>
<div class="t" style="left:959.5px;width:60px;text-align:right;top:522.3px;font-size:24px;color:#8a8a8a;font-family:'Liberation Mono', monospace">489</div>
<div class="t" style="left:1041.0px;top:523.5px;font-size:24px;color:#d4d4d4;font-weight:400;font-family:'Liberation Mono', monospace;width:969px;overflow:hidden;letter-spacing:0.02px;">    <span style="color:#569cd6">const</span> <span style="color:#d4d4d4">originalVisibility</span> <span style="color:#d4d4d4">=</span> <span style="color:#d4d4d4">container</span><span style="color:#d4d4d4">.</span><span style="color:#d4d4d4">style</span><span style="color:#d4d4d4">.</span><span style="color:#d4d4d4">visibility</span><span style="color:#d4d4d4">;</span></div>
<div class="b" style="left:1041px;top:553px;width:2px;height:40px;background:#404040"></div>
<div class="b" style="left:1070px;top:553px;width:2px;height:40px;background:#404040"></div>
<div class="t" style="left:959.5px;width:60px;text-align:right;top:562.3px;font-size:24px;color:#8a8a8a;font-family:'Liberation Mono', monospace">490</div>
<div class="t" style="left:1041.0px;top:563.5px;font-size:24px;color:#d4d4d4;font-weight:400;font-family:'Liberation Mono', monospace;width:969px;overflow:hidden;letter-spacing:0.02px;">    <span style="color:#569cd6">const</span> <span style="color:#d4d4d4">originalTransform</span> <span style="color:#d4d4d4">=</span> <span style="color:#d4d4d4">container</span><span style="color:#d4d4d4">.</span><span style="color:#d4d4d4">style</span><span style="color:#d4d4d4">.</span><span style="color:#d4d4d4">transform</span><span style="color:#d4d4d4">;</span></div>
<div class="b" style="left:1041px;top:593px;width:2px;height:40px;background:#404040"></div>
<div class="b" style="left:1070px;top:593px;width:2px;height:40px;background:#404040"></div>
<div class="t" style="left:959.5px;width:60px;text-align:right;top:602.3px;font-size:24px;color:#8a8a8a;font-family:'Liberation Mono', monospace">491</div>
<div class="t" style="left:1041.0px;top:603.5px;font-size:24px;color:#d4d4d4;font-weight:400;font-family:'Liberation Mono', monospace;width:969px;overflow:hidden;letter-spacing:0.02px;">    <span style="color:#569cd6">let</span> <span style="color:#d4d4d4">isContainerVisible</span> <span style="color:#d4d4d4">=</span> <span style="color:#d4d4d4">container</span><span style="color:#d4d4d4">.</span><span style="color:#d4d4d4">style</span><span style="color:#d4d4d4">.</span><span style="color:#d4d4d4">visibility</span> <span style="color:#d4d4d4">!</span><span style="color:#d4d4d4">=</span><span style="color:#d4d4d4">=</span> <span style="color:#ce9178">&quot;hidden&quot;</span><span style="color:#d4d4d4">;</span></div>
<div class="b" style="left:1041px;top:721px;width:2px;height:40px;background:#404040"></div>
<div class="b" style="left:1070px;top:721px;width:2px;height:40px;background:#404040"></div>
<div class="t" style="left:959.5px;width:60px;text-align:right;top:730.3px;font-size:24px;color:#8a8a8a;font-family:'Liberation Mono', monospace">518</div>
<div class="t" style="left:1041.0px;top:731.5px;font-size:24px;color:#d4d4d4;font-weight:400;font-family:'Liberation Mono', monospace;width:969px;overflow:hidden;letter-spacing:0.02px;">    <span style="color:#179fff">}</span></div>
<div class="b" style="left:1041px;top:761px;width:2px;height:40px;background:#404040"></div>
<div class="b" style="left:1070px;top:761px;width:2px;height:40px;background:#404040"></div>
<div class="t" style="left:959.5px;width:60px;text-align:right;top:770.3px;font-size:24px;color:#8a8a8a;font-family:'Liberation Mono', monospace">519</div>
<div class="b" style="left:1041px;top:801px;width:2px;height:40px;background:#404040"></div>
<div class="b" style="left:1070px;top:801px;width:2px;height:40px;background:#404040"></div>
<div class="t" style="left:959.5px;width:60px;text-align:right;top:810.3px;font-size:24px;color:#8a8a8a;font-family:'Liberation Mono', monospace">520</div>
<div class="t" style="left:1041.0px;top:811.5px;font-size:24px;color:#d4d4d4;font-weight:400;font-family:'Liberation Mono', monospace;width:969px;overflow:hidden;letter-spacing:0.02px;">    <span style="color:#569cd6">const</span> <span style="color:#d4d4d4">computeHeight</span> <span style="color:#d4d4d4">=</span> <span style="color:#179fff">(</span><span style="color:#d4d4d4">targetEditor</span><span style="color:#d4d4d4">:</span> <span style="color:#d4d4d4">editor</span><span style="color:#d4d4d4">.</span><span style="color:#4ec9b0">IStandaloneCodeEditor</span><span style="color:#179fff">)</span> <span style="color:#d4d4d4">=</span><span style="color:#d4d4d4">&gt;</span> <span style="color:#179fff">{</span></div>
<div class="b" style="left:1041px;top:1241px;width:2px;height:40px;background:#404040"></div>
<div class="b" style="left:1070px;top:1241px;width:2px;height:40px;background:#404040"></div>
<div class="b" style="left:1099px;top:1241px;width:2px;height:40px;background:#404040"></div>
<div class="t" style="left:959.5px;width:60px;text-align:right;top:1250.3px;font-size:24px;color:#8a8a8a;font-family:'Liberation Mono', monospace">521</div>
<div class="t" style="left:1041.0px;top:1251.5px;font-size:24px;color:#d4d4d4;font-weight:400;font-family:'Liberation Mono', monospace;width:969px;overflow:hidden;letter-spacing:0.02px;">      <span style="color:#569cd6">const</span> <span style="color:#d4d4d4">contentHeight</span> <span style="color:#d4d4d4">=</span> <span style="color:#d4d4d4">targetEditor</span><span style="color:#d4d4d4">.</span><span style="color:#d4d4d4">getContentHeight</span><span style="color:#ffd700">(</span><span style="color:#ffd700">)</span><span style="color:#d4d4d4">;</span></div>
<div class="b" style="left:1041px;top:1281px;width:2px;height:40px;background:#5a3a3a"></div>
<div class="b" style="left:1070px;top:1281px;width:2px;height:40px;background:#5a3a3a"></div>
<div class="b" style="left:1099px;top:1281px;width:2px;height:40px;background:#5a3a3a"></div>
<div class="t" style="left:959.5px;width:60px;text-align:right;top:1290.3px;font-size:24px;color:#8a8a8a;font-family:'Liberation Mono', monospace">522</div>
<div class="t" style="left:1041.0px;top:1291.5px;font-size:24px;color:#d4d4d4;font-weight:400;font-family:'Liberation Mono', monospace;width:969px;overflow:hidden;letter-spacing:0.02px;">      <span style="color:#569cd6">if</span> <span style="color:#ffd700">(</span><span style="color:#d4d4d4">contentHeight</span> <span style="color:#d4d4d4">&gt;</span> <span style="color:#b5c0a8">0</span><span style="color:#ffd700">)</span> <span style="color:#ffd700">{</span></div>
<div class="b" style="left:1041px;top:1321px;width:2px;height:40px;background:#404040"></div>
<div class="b" style="left:1070px;top:1321px;width:2px;height:40px;background:#404040"></div>
<div class="b" style="left:1099px;top:1321px;width:2px;height:40px;background:#404040"></div>
<div class="b" style="left:1127px;top:1321px;width:2px;height:40px;background:#404040"></div>
<div class="t" style="left:959.5px;width:60px;text-align:right;top:1330.3px;font-size:24px;color:#8a8a8a;font-family:'Liberation Mono', monospace">523</div>
<div class="t" style="left:1041.0px;top:1331.5px;font-size:24px;color:#d4d4d4;font-weight:400;font-family:'Liberation Mono', monospace;width:969px;overflow:hidden;letter-spacing:0.02px;">        <span style="color:#569cd6">return</span> <span style="color:#d4d4d4">contentHeight</span><span style="color:#d4d4d4">;</span></div>
<div class="b" style="left:1041px;top:1361px;width:2px;height:40px;background:#404040"></div>
<div class="b" style="left:1070px;top:1361px;width:2px;height:40px;background:#404040"></div>
<div class="b" style="left:1099px;top:1361px;width:2px;height:40px;background:#404040"></div>
<div class="t" style="left:959.5px;width:60px;text-align:right;top:1370.3px;font-size:24px;color:#8a8a8a;font-family:'Liberation Mono', monospace">524</div>
<div class="t" style="left:1041.0px;top:1371.5px;font-size:24px;color:#d4d4d4;font-weight:400;font-family:'Liberation Mono', monospace;width:969px;overflow:hidden;letter-spacing:0.02px;">      <span style="color:#ffd700">}</span></div>
<div class="b" style="left:1041px;top:1401px;width:2px;height:40px;background:#404040"></div>
<div class="b" style="left:1070px;top:1401px;width:2px;height:40px;background:#404040"></div>
<div class="b" style="left:1099px;top:1401px;width:2px;height:40px;background:#404040"></div>
<div class="t" style="left:959.5px;width:60px;text-align:right;top:1410.3px;font-size:24px;color:#8a8a8a;font-family:'Liberation Mono', monospace">525</div>
<div class="b" style="left:1041px;top:1441px;width:2px;height:40px;background:#404040"></div>
<div class="b" style="left:1070px;top:1441px;width:2px;height:40px;background:#404040"></div>
<div class="b" style="left:1099px;top:1441px;width:2px;height:40px;background:#404040"></div>
<div class="t" style="left:959.5px;width:60px;text-align:right;top:1450.3px;font-size:24px;color:#8a8a8a;font-family:'Liberation Mono', monospace">526</div>
<div class="t" style="left:1041.0px;top:1451.5px;font-size:24px;color:#d4d4d4;font-weight:400;font-family:'Liberation Mono', monospace;width:969px;overflow:hidden;letter-spacing:0.02px;">      <span style="color:#569cd6">const</span> <span style="color:#d4d4d4">lineHeight</span> <span style="color:#d4d4d4">=</span> <span style="color:#d4d4d4">targetEditor</span><span style="color:#d4d4d4">.</span><span style="color:#d4d4d4">getOption</span><span style="color:#ffd700">(</span></div>
<div class="b" style="left:1041px;top:1481px;width:2px;height:40px;background:#404040"></div>
<div class="b" style="left:1070px;top:1481px;width:2px;height:40px;background:#404040"></div>
<div class="b" style="left:1099px;top:1481px;width:2px;height:40px;background:#404040"></div>
<div class="b" style="left:1127px;top:1481px;width:2px;height:40px;background:#404040"></div>
<div class="t" style="left:959.5px;width:60px;text-align:right;top:1490.3px;font-size:24px;color:#8a8a8a;font-family:'Liberation Mono', monospace">527</div>
<div class="t" style="left:1041.0px;top:1491.5px;font-size:24px;color:#d4d4d4;font-weight:400;font-family:'Liberation Mono', monospace;width:969px;overflow:hidden;letter-spacing:0.02px;">        <span style="color:#d4d4d4">monacoInstance</span><span style="color:#d4d4d4">.</span><span style="color:#d4d4d4">editor</span><span style="color:#d4d4d4">.</span><span style="color:#4ec9b0">EditorOption</span><span style="color:#d4d4d4">.</span><span style="color:#d4d4d4">lineHeight</span><span style="color:#d4d4d4">,</span></div>
<div class="b" style="left:1041px;top:1521px;width:2px;height:40px;background:#404040"></div>
<div class="b" style="left:1070px;top:1521px;width:2px;height:40px;background:#404040"></div>
<div class="b" style="left:1099px;top:1521px;width:2px;height:40px;background:#404040"></div>
<div class="t" style="left:959.5px;width:60px;text-align:right;top:1530.3px;font-size:24px;color:#8a8a8a;font-family:'Liberation Mono', monospace">528</div>
<div class="t" style="left:1041.0px;top:1531.5px;font-size:24px;color:#d4d4d4;font-weight:400;font-family:'Liberation Mono', monospace;width:969px;overflow:hidden;letter-spacing:0.02px;">      <span style="color:#ffd700">)</span><span style="color:#d4d4d4">;</span></div>
<div class="b" style="left:1041px;top:1561px;width:2px;height:40px;background:#5a3a3a"></div>
<div class="b" style="left:1070px;top:1561px;width:2px;height:40px;background:#5a3a3a"></div>
<div class="b" style="left:1099px;top:1561px;width:2px;height:40px;background:#5a3a3a"></div>
<div class="t" style="left:959.5px;width:60px;text-align:right;top:1570.3px;font-size:24px;color:#8a8a8a;font-family:'Liberation Mono', monospace">529</div>
<div class="t" style="left:1041.0px;top:1571.5px;font-size:24px;color:#d4d4d4;font-weight:400;font-family:'Liberation Mono', monospace;width:969px;overflow:hidden;letter-spacing:0.02px;">      <span style="color:#569cd6">const</span> <span style="color:#d4d4d4">model</span> <span style="color:#d4d4d4">=</span> <span style="color:#d4d4d4">targetEditor</span><span style="color:#d4d4d4">.</span><span style="color:#d4d4d4">getModel</span><span style="color:#ffd700">(</span><span style="color:#ffd700">)</span><span style="color:#d4d4d4">;</span></div>
<div class="b" style="left:1041px;top:1601px;width:2px;height:40px;background:#5a3a3a"></div>
<div class="b" style="left:1070px;top:1601px;width:2px;height:40px;background:#5a3a3a"></div>
<div class="b" style="left:1099px;top:1601px;width:2px;height:40px;background:#5a3a3a"></div>
<div class="t" style="left:959.5px;width:60px;text-align:right;top:1610.3px;font-size:24px;color:#8a8a8a;font-family:'Liberation Mono', monospace">530</div>
<div class="t" style="left:1041.0px;top:1611.5px;font-size:24px;color:#d4d4d4;font-weight:400;font-family:'Liberation Mono', monospace;width:969px;overflow:hidden;letter-spacing:0.02px;">      <span style="color:#569cd6">const</span> <span style="color:#d4d4d4">lineCount</span> <span style="color:#d4d4d4">=</span> <span style="color:#d4d4d4">model</span> <span style="color:#d4d4d4">?</span> <span style="color:#4ec9b0">Math</span><span style="color:#d4d4d4">.</span><span style="color:#d4d4d4">max</span><span style="color:#ffd700">(</span><span style="color:#b5c0a8">1</span><span style="color:#d4d4d4">,</span> <span style="color:#d4d4d4">model</span><span style="color:#d4d4d4">.</span><span style="color:#d4d4d4">getLineCount</span><span style="color:#a8a8a8">(</span><span style="color:#a8a8a8">)</span><span style="color:#ffd700">)</span> <span style="color:#d4d4d4">:</span> <span style="color:#b5c0a8">1</span><span style="color:#d4d4d4">;</span></div>
<div class="b" style="left:1041px;top:1641px;width:2px;height:40px;background:#404040"></div>
<div class="b" style="left:1070px;top:1641px;width:2px;height:40px;background:#404040"></div>
<div class="b" style="left:1099px;top:1641px;width:2px;height:40px;background:#404040"></div>
<div class="t" style="left:959.5px;width:60px;text-align:right;top:1650.3px;font-size:24px;color:#8a8a8a;font-family:'Liberation Mono', monospace">531</div>
<div class="b" style="left:1041px;top:1681px;width:2px;height:40px;background:#404040"></div>
<div class="b" style="left:1070px;top:1681px;width:2px;height:40px;background:#404040"></div>
<div class="b" style="left:1099px;top:1681px;width:2px;height:40px;background:#404040"></div>
<div class="t" style="left:959.5px;width:60px;text-align:right;top:1690.3px;font-size:24px;color:#8a8a8a;font-family:'Liberation Mono', monospace">532</div>
<div class="t" style="left:1041.0px;top:1691.5px;font-size:24px;color:#d4d4d4;font-weight:400;font-family:'Liberation Mono', monospace;width:969px;overflow:hidden;letter-spacing:0.02px;">      <span style="color:#569cd6">return</span> <span style="color:#d4d4d4">lineCount</span> <span style="color:#d4d4d4">*</span> <span style="color:#d4d4d4">lineHeight</span><span style="color:#d4d4d4">;</span></div>
<div class="b" style="left:1041px;top:1721px;width:2px;height:40px;background:#404040"></div>
<div class="b" style="left:1070px;top:1721px;width:2px;height:40px;background:#404040"></div>
<div class="t" style="left:959.5px;width:60px;text-align:right;top:1730.3px;font-size:24px;color:#8a8a8a;font-family:'Liberation Mono', monospace">533</div>
<div class="t" style="left:1041.0px;top:1731.5px;font-size:24px;color:#d4d4d4;font-weight:400;font-family:'Liberation Mono', monospace;width:969px;overflow:hidden;letter-spacing:0.02px;">    <span style="color:#179fff">}</span><span style="color:#d4d4d4">;</span></div>
<div class="b" style="left:1041px;top:1761px;width:2px;height:40px;background:#404040"></div>
<div class="b" style="left:1070px;top:1761px;width:2px;height:40px;background:#404040"></div>
<div class="t" style="left:959.5px;width:60px;text-align:right;top:1770.3px;font-size:24px;color:#8a8a8a;font-family:'Liberation Mono', monospace">534</div>
<div class="b" style="left:1041px;top:1801px;width:2px;height:40px;background:#404040"></div>
<div class="b" style="left:1070px;top:1801px;width:2px;height:40px;background:#404040"></div>
<div class="t" style="left:959.5px;width:60px;text-align:right;top:1810.3px;font-size:24px;color:#8a8a8a;font-family:'Liberation Mono', monospace">535</div>
<div class="t" style="left:1041.0px;top:1811.5px;font-size:24px;color:#d4d4d4;font-weight:400;font-family:'Liberation Mono', monospace;width:969px;overflow:hidden;letter-spacing:0.02px;">    <span style="color:#d4d4d4">container</span><span style="color:#d4d4d4">.</span><span style="color:#d4d4d4">style</span><span style="color:#d4d4d4">.</span><span style="color:#d4d4d4">minHeight</span> <span style="color:#d4d4d4">=</span> <span style="color:#ce9178">`</span><span style="color:#179fff">${</span><span style="color:#d4d4d4">targetMinHeight</span><span style="color:#179fff">}</span><span style="color:#ce9178">px</span><span style="color:#ce9178">`</span><span style="color:#d4d4d4">;</span></div>
<div class="b" style="left:1041px;top:1841px;width:2px;height:40px;background:#404040"></div>
<div class="b" style="left:1070px;top:1841px;width:2px;height:40px;background:#404040"></div>
<div class="t" style="left:959.5px;width:60px;text-align:right;top:1850.3px;font-size:24px;color:#8a8a8a;font-family:'Liberation Mono', monospace">536</div>
<div class="b" style="left:2107px;top:353px;width:2px;height:40px;background:#404040"></div>
<div class="b" style="left:2136px;top:353px;width:2px;height:40px;background:#404040"></div>
<div class="t" style="left:2025px;width:60px;text-align:right;top:362.3px;font-size:24px;color:#8a8a8a;font-family:'Liberation Mono', monospace">486</div>
<div class="t" style="left:2107.0px;top:363.5px;font-size:24px;color:#d4d4d4;font-weight:400;font-family:'Liberation Mono', monospace;width:983px;overflow:hidden;letter-spacing:0.02px;">    <span style="color:#179fff">}</span></div>
<div class="b" style="left:2107px;top:393px;width:2px;height:40px;background:#404040"></div>
<div class="b" style="left:2136px;top:393px;width:2px;height:40px;background:#404040"></div>
<div class="t" style="left:2025px;width:60px;text-align:right;top:402.3px;font-size:24px;color:#8a8a8a;font-family:'Liberation Mono', monospace">487</div>
<div class="b" style="left:2107px;top:433px;width:2px;height:40px;background:#404040"></div>
<div class="b" style="left:2136px;top:433px;width:2px;height:40px;background:#404040"></div>
<div class="t" style="left:2025px;width:60px;text-align:right;top:442.3px;font-size:24px;color:#8a8a8a;font-family:'Liberation Mono', monospace">488</div>
<div class="t" style="left:2107.0px;top:443.5px;font-size:24px;color:#d4d4d4;font-weight:400;font-family:'Liberation Mono', monospace;width:983px;overflow:hidden;letter-spacing:0.02px;">    <span style="color:#569cd6">const</span> <span style="color:#d4d4d4">disposables</span><span style="color:#d4d4d4">:</span> <span style="color:#4ec9b0">Array</span><span style="color:#d4d4d4">&lt;</span><span style="color:#179fff">{</span> <span style="color:#d4d4d4">dispose</span><span style="color:#d4d4d4">:</span> <span style="color:#ffd700">(</span><span style="color:#ffd700">)</span> <span style="color:#d4d4d4">=</span><span style="color:#d4d4d4">&gt;</span> <span style="color:#569cd6">void</span> <span style="color:#179fff">}</span><span style="color:#d4d4d4">&gt;</span> <span style="color:#d4d4d4">=</span> <span style="color:#179fff">[</span><span style="color:#179fff">]</span><span style="color:#d4d4d4">;</span></div>
<div class="b" style="left:2107px;top:473px;width:2px;height:40px;background:#687550"></div>
<div class="b" style="left:2136px;top:473px;width:2px;height:40px;background:#687550"></div>
<div class="t" style="left:2025px;width:60px;text-align:right;top:482.3px;font-size:24px;color:#8a8a8a;font-family:'Liberation Mono', monospace">489</div>
<div class="t" style="left:2107.0px;top:483.5px;font-size:24px;color:#d4d4d4;font-weight:400;font-family:'Liberation Mono', monospace;width:983px;overflow:hidden;letter-spacing:0.02px;">    <span style="color:#569cd6">let</span> <span style="color:#d4d4d4">isDisposed</span> <span style="color:#d4d4d4">=</span> <span style="color:#569cd6">false</span><span style="color:#d4d4d4">;</span></div>
<div class="b" style="left:2107px;top:513px;width:2px;height:40px;background:#404040"></div>
<div class="b" style="left:2136px;top:513px;width:2px;height:40px;background:#404040"></div>
<div class="t" style="left:2025px;width:60px;text-align:right;top:522.3px;font-size:24px;color:#8a8a8a;font-family:'Liberation Mono', monospace">490</div>
<div class="t" style="left:2107.0px;top:523.5px;font-size:24px;color:#d4d4d4;font-weight:400;font-family:'Liberation Mono', monospace;width:983px;overflow:hidden;letter-spacing:0.02px;">    <span style="color:#569cd6">const</span> <span style="color:#d4d4d4">originalVisibility</span> <span style="color:#d4d4d4">=</span> <span style="color:#d4d4d4">container</span><span style="color:#d4d4d4">.</span><span style="color:#d4d4d4">style</span><span style="color:#d4d4d4">.</span><span style="color:#d4d4d4">visibility</span><span style="color:#d4d4d4">;</span></div>
<div class="b" style="left:2107px;top:553px;width:2px;height:40px;background:#404040"></div>
<div class="b" style="left:2136px;top:553px;width:2px;height:40px;background:#404040"></div>
<div class="t" style="left:2025px;width:60px;text-align:right;top:562.3px;font-size:24px;color:#8a8a8a;font-family:'Liberation Mono', monospace">491</div>
<div class="t" style="left:2107.0px;top:563.5px;font-size:24px;color:#d4d4d4;font-weight:400;font-family:'Liberation Mono', monospace;width:983px;overflow:hidden;letter-spacing:0.02px;">    <span style="color:#569cd6">const</span> <span style="color:#d4d4d4">originalTransform</span> <span style="color:#d4d4d4">=</span> <span style="color:#d4d4d4">container</span><span style="color:#d4d4d4">.</span><span style="color:#d4d4d4">style</span><span style="color:#d4d4d4">.</span><span style="color:#d4d4d4">transform</span><span style="color:#d4d4d4">;</span></div>
<div class="b" style="left:2107px;top:593px;width:2px;height:40px;background:#404040"></div>
<div class="b" style="left:2136px;top:593px;width:2px;height:40px;background:#404040"></div>
<div class="t" style="left:2025px;width:60px;text-align:right;top:602.3px;font-size:24px;color:#8a8a8a;font-family:'Liberation Mono', monospace">492</div>
<div class="t" style="left:2107.0px;top:603.5px;font-size:24px;color:#d4d4d4;font-weight:400;font-family:'Liberation Mono', monospace;width:983px;overflow:hidden;letter-spacing:0.02px;">    <span style="color:#569cd6">let</span> <span style="color:#d4d4d4">isContainerVisible</span> <span style="color:#d4d4d4">=</span> <span style="color:#d4d4d4">container</span><span style="color:#d4d4d4">.</span><span style="color:#d4d4d4">style</span><span style="color:#d4d4d4">.</span><span style="color:#d4d4d4">visibility</span> <span style="color:#d4d4d4">!</span><span style="color:#d4d4d4">=</span><span style="color:#d4d4d4">=</span></div>
<div class="b" style="left:2107px;top:633px;width:2px;height:40px;background:#404040"></div>
<div class="b" style="left:2136px;top:633px;width:2px;height:40px;background:#404040"></div>
<div class="t" style="left:2107.0px;top:643.5px;font-size:24px;color:#d4d4d4;font-weight:400;font-family:'Liberation Mono', monospace;width:983px;overflow:hidden;letter-spacing:0.02px;">    <span style="color:#ce9178">&quot;hidden&quot;</span><span style="color:#d4d4d4">;</span></div>
<div class="b" style="left:2107px;top:720px;width:2px;height:40px;background:#404040"></div>
<div class="b" style="left:2136px;top:720px;width:2px;height:40px;background:#404040"></div>
<div class="t" style="left:2025px;width:60px;text-align:right;top:729.3px;font-size:24px;color:#8a8a8a;font-family:'Liberation Mono', monospace">519</div>
<div class="t" style="left:2107.0px;top:730.5px;font-size:24px;color:#d4d4d4;font-weight:400;font-family:'Liberation Mono', monospace;width:983px;overflow:hidden;letter-spacing:0.02px;">    <span style="color:#179fff">}</span></div>
<div class="b" style="left:2107px;top:760px;width:2px;height:40px;background:#404040"></div>
<div class="b" style="left:2136px;top:760px;width:2px;height:40px;background:#404040"></div>
<div class="t" style="left:2025px;width:60px;text-align:right;top:769.3px;font-size:24px;color:#8a8a8a;font-family:'Liberation Mono', monospace">520</div>
<div class="b" style="left:2107px;top:800px;width:2px;height:40px;background:#404040"></div>
<div class="b" style="left:2136px;top:800px;width:2px;height:40px;background:#404040"></div>
<div class="t" style="left:2025px;width:60px;text-align:right;top:809.3px;font-size:24px;color:#8a8a8a;font-family:'Liberation Mono', monospace">521</div>
<div class="t" style="left:2107.0px;top:810.5px;font-size:24px;color:#d4d4d4;font-weight:400;font-family:'Liberation Mono', monospace;width:983px;overflow:hidden;letter-spacing:0.02px;">    <span style="color:#569cd6">const</span> <span style="color:#d4d4d4">computeHeight</span> <span style="color:#d4d4d4">=</span> <span style="color:#179fff">(</span><span style="color:#d4d4d4">targetEditor</span><span style="color:#d4d4d4">:</span> <span style="color:#d4d4d4">editor</span><span style="color:#d4d4d4">.</span></div>
<div class="b" style="left:2107px;top:840px;width:2px;height:40px;background:#404040"></div>
<div class="b" style="left:2136px;top:840px;width:2px;height:40px;background:#404040"></div>
<div class="t" style="left:2107.0px;top:850.5px;font-size:24px;color:#d4d4d4;font-weight:400;font-family:'Liberation Mono', monospace;width:983px;overflow:hidden;letter-spacing:0.02px;">    <span style="color:#4ec9b0">IStandaloneCodeEditor</span><span style="color:#179fff">)</span> <span style="color:#d4d4d4">=</span><span style="color:#d4d4d4">&gt;</span> <span style="color:#179fff">{</span></div>
<div class="b" style="left:2107px;top:880px;width:2px;height:40px;background:#687550"></div>
<div class="b" style="left:2136px;top:880px;width:2px;height:40px;background:#687550"></div>
<div class="b" style="left:2165px;top:880px;width:2px;height:40px;background:#687550"></div>
<div class="t" style="left:2025px;width:60px;text-align:right;top:889.3px;font-size:24px;color:#8a8a8a;font-family:'Liberation Mono', monospace">522</div>
<div class="t" style="left:2107.0px;top:890.5px;font-size:24px;color:#d4d4d4;font-weight:400;font-family:'Liberation Mono', monospace;width:983px;overflow:hidden;letter-spacing:0.02px;">      <span style="color:#569cd6">if</span> <span style="color:#ffd700">(</span><span style="color:#d4d4d4">isDisposed</span><span style="color:#ffd700">)</span> <span style="color:#ffd700">{</span></div>
<div class="b" style="left:2107px;top:920px;width:2px;height:40px;background:#687550"></div>
<div class="b" style="left:2136px;top:920px;width:2px;height:40px;background:#687550"></div>
<div class="b" style="left:2165px;top:920px;width:2px;height:40px;background:#687550"></div>
<div class="b" style="left:2193px;top:920px;width:2px;height:40px;background:#687550"></div>
<div class="t" style="left:2025px;width:60px;text-align:right;top:929.3px;font-size:24px;color:#8a8a8a;font-family:'Liberation Mono', monospace">523</div>
<div class="t" style="left:2107.0px;top:930.5px;font-size:24px;color:#d4d4d4;font-weight:400;font-family:'Liberation Mono', monospace;width:983px;overflow:hidden;letter-spacing:0.02px;">        <span style="color:#569cd6">return</span> <span style="color:#d4d4d4">targetMinHeight</span><span style="color:#d4d4d4">;</span></div>
<div class="b" style="left:2107px;top:960px;width:2px;height:40px;background:#687550"></div>
<div class="b" style="left:2136px;top:960px;width:2px;height:40px;background:#687550"></div>
<div class="b" style="left:2165px;top:960px;width:2px;height:40px;background:#687550"></div>
<div class="t" style="left:2025px;width:60px;text-align:right;top:969.3px;font-size:24px;color:#8a8a8a;font-family:'Liberation Mono', monospace">524</div>
<div class="t" style="left:2107.0px;top:970.5px;font-size:24px;color:#d4d4d4;font-weight:400;font-family:'Liberation Mono', monospace;width:983px;overflow:hidden;letter-spacing:0.02px;">      <span style="color:#ffd700">}</span></div>
<div class="b" style="left:2107px;top:1000px;width:2px;height:40px;background:#687550"></div>
<div class="b" style="left:2136px;top:1000px;width:2px;height:40px;background:#687550"></div>
<div class="b" style="left:2165px;top:1000px;width:2px;height:40px;background:#687550"></div>
<div class="t" style="left:2025px;width:60px;text-align:right;top:1009.3px;font-size:24px;color:#8a8a8a;font-family:'Liberation Mono', monospace">525</div>
<div class="b" style="left:2107px;top:1040px;width:2px;height:40px;background:#687550"></div>
<div class="b" style="left:2136px;top:1040px;width:2px;height:40px;background:#687550"></div>
<div class="b" style="left:2165px;top:1040px;width:2px;height:40px;background:#687550"></div>
<div class="t" style="left:2025px;width:60px;text-align:right;top:1049.3px;font-size:24px;color:#8a8a8a;font-family:'Liberation Mono', monospace">526</div>
<div class="t" style="left:2107.0px;top:1050.5px;font-size:24px;color:#d4d4d4;font-weight:400;font-family:'Liberation Mono', monospace;width:983px;overflow:hidden;letter-spacing:0.02px;">      <span style="color:#569cd6">const</span> <span style="color:#d4d4d4">model</span> <span style="color:#d4d4d4">=</span> <span style="color:#d4d4d4">targetEditor</span><span style="color:#d4d4d4">.</span><span style="color:#d4d4d4">getModel</span><span style="color:#ffd700">(</span><span style="color:#ffd700">)</span><span style="color:#d4d4d4">;</span></div>
<div class="b" style="left:2107px;top:1080px;width:2px;height:40px;background:#687550"></div>
<div class="b" style="left:2136px;top:1080px;width:2px;height:40px;background:#687550"></div>
<div class="b" style="left:2165px;top:1080px;width:2px;height:40px;background:#687550"></div>
<div class="t" style="left:2025px;width:60px;text-align:right;top:1089.3px;font-size:24px;color:#8a8a8a;font-family:'Liberation Mono', monospace">527</div>
<div class="t" style="left:2107.0px;top:1090.5px;font-size:24px;color:#d4d4d4;font-weight:400;font-family:'Liberation Mono', monospace;width:983px;overflow:hidden;letter-spacing:0.02px;">      <span style="color:#569cd6">if</span> <span style="color:#ffd700">(</span><span style="color:#d4d4d4">!</span><span style="color:#d4d4d4">model</span><span style="color:#ffd700">)</span> <span style="color:#ffd700">{</span></div>
<div class="b" style="left:2107px;top:1120px;width:2px;height:40px;background:#687550"></div>
<div class="b" style="left:2136px;top:1120px;width:2px;height:40px;background:#687550"></div>
<div class="b" style="left:2165px;top:1120px;width:2px;height:40px;background:#687550"></div>
<div class="b" style="left:2193px;top:1120px;width:2px;height:40px;background:#687550"></div>
<div class="t" style="left:2025px;width:60px;text-align:right;top:1129.3px;font-size:24px;color:#8a8a8a;font-family:'Liberation Mono', monospace">528</div>
<div class="t" style="left:2107.0px;top:1130.5px;font-size:24px;color:#d4d4d4;font-weight:400;font-family:'Liberation Mono', monospace;width:983px;overflow:hidden;letter-spacing:0.02px;">        <span style="color:#569cd6">return</span> <span style="color:#d4d4d4">targetMinHeight</span><span style="color:#d4d4d4">;</span></div>
<div class="b" style="left:2107px;top:1160px;width:2px;height:40px;background:#687550"></div>
<div class="b" style="left:2136px;top:1160px;width:2px;height:40px;background:#687550"></div>
<div class="b" style="left:2165px;top:1160px;width:2px;height:40px;background:#687550"></div>
<div class="t" style="left:2025px;width:60px;text-align:right;top:1169.3px;font-size:24px;color:#8a8a8a;font-family:'Liberation Mono', monospace">529</div>
<div class="t" style="left:2107.0px;top:1170.5px;font-size:24px;color:#d4d4d4;font-weight:400;font-family:'Liberation Mono', monospace;width:983px;overflow:hidden;letter-spacing:0.02px;">      <span style="color:#ffd700">}</span></div>
<div class="b" style="left:2107px;top:1200px;width:2px;height:40px;background:#687550"></div>
<div class="b" style="left:2136px;top:1200px;width:2px;height:40px;background:#687550"></div>
<div class="b" style="left:2165px;top:1200px;width:2px;height:40px;background:#687550"></div>
<div class="t" style="left:2025px;width:60px;text-align:right;top:1209.3px;font-size:24px;color:#8a8a8a;font-family:'Liberation Mono', monospace">530</div>
<div class="b" style="left:2107px;top:1240px;width:2px;height:40px;background:#404040"></div>
<div class="b" style="left:2136px;top:1240px;width:2px;height:40px;background:#404040"></div>
<div class="b" style="left:2165px;top:1240px;width:2px;height:40px;background:#404040"></div>
<div class="t" style="left:2025px;width:60px;text-align:right;top:1249.3px;font-size:24px;color:#8a8a8a;font-family:'Liberation Mono', monospace">531</div>
<div class="t" style="left:2107.0px;top:1250.5px;font-size:24px;color:#d4d4d4;font-weight:400;font-family:'Liberation Mono', monospace;width:983px;overflow:hidden;letter-spacing:0.02px;">      <span style="color:#569cd6">const</span> <span style="color:#d4d4d4">contentHeight</span> <span style="color:#d4d4d4">=</span> <span style="color:#d4d4d4">targetEditor</span><span style="color:#d4d4d4">.</span><span style="color:#d4d4d4">getContentHeight</span><span style="color:#ffd700">(</span><span style="color:#ffd700">)</span><span style="color:#d4d4d4">;</span></div>
<div class="b" style="left:2107px;top:1280px;width:2px;height:40px;background:#687550"></div>
<div class="b" style="left:2136px;top:1280px;width:2px;height:40px;background:#687550"></div>
<div class="b" style="left:2165px;top:1280px;width:2px;height:40px;background:#687550"></div>
<div class="t" style="left:2025px;width:60px;text-align:right;top:1289.3px;font-size:24px;color:#8a8a8a;font-family:'Liberation Mono', monospace">532</div>
<div class="t" style="left:2107.0px;top:1290.5px;font-size:24px;color:#d4d4d4;font-weight:400;font-family:'Liberation Mono', monospace;width:983px;overflow:hidden;letter-spacing:0.02px;">      <span style="color:#569cd6">if</span> <span style="color:#ffd700">(</span><span style="color:#d4d4d4">contentHeight</span> <span style="color:#d4d4d4">&gt;</span> <span style="color:#b5c0a8">0</span> <span style="color:#d4d4d4">&amp;</span><span style="color:#d4d4d4">&amp;</span> <span style="color:#4ec9b0">Number</span><span style="color:#d4d4d4">.</span><span style="color:#d4d4d4">isFinite</span><span style="color:#a8a8a8">(</span><span style="color:#d4d4d4">contentHeight</span><span style="color:#a8a8a8">)</span><span style="color:#ffd700">)</span> <span style="color:#ffd700">{</span></div>
<div class="b" style="left:2107px;top:1320px;width:2px;height:40px;background:#404040"></div>
<div class="b" style="left:2136px;top:1320px;width:2px;height:40px;background:#404040"></div>
<div class="b" style="left:2165px;top:1320px;width:2px;height:40px;background:#404040"></div>
<div class="b" style="left:2193px;top:1320px;width:2px;height:40px;background:#404040"></div>
<div class="t" style="left:2025px;width:60px;text-align:right;top:1329.3px;font-size:24px;color:#8a8a8a;font-family:'Liberation Mono', monospace">533</div>
<div class="t" style="left:2107.0px;top:1330.5px;font-size:24px;color:#d4d4d4;font-weight:400;font-family:'Liberation Mono', monospace;width:983px;overflow:hidden;letter-spacing:0.02px;">        <span style="color:#569cd6">return</span> <span style="color:#d4d4d4">contentHeight</span><span style="color:#d4d4d4">;</span></div>
<div class="b" style="left:2107px;top:1360px;width:2px;height:40px;background:#404040"></div>
<div class="b" style="left:2136px;top:1360px;width:2px;height:40px;background:#404040"></div>
<div class="b" style="left:2165px;top:1360px;width:2px;height:40px;background:#404040"></div>
<div class="t" style="left:2025px;width:60px;text-align:right;top:1369.3px;font-size:24px;color:#8a8a8a;font-family:'Liberation Mono', monospace">534</div>
<div class="t" style="left:2107.0px;top:1370.5px;font-size:24px;color:#d4d4d4;font-weight:400;font-family:'Liberation Mono', monospace;width:983px;overflow:hidden;letter-spacing:0.02px;">      <span style="color:#ffd700">}</span></div>
<div class="b" style="left:2107px;top:1400px;width:2px;height:40px;background:#404040"></div>
<div class="b" style="left:2136px;top:1400px;width:2px;height:40px;background:#404040"></div>
<div class="b" style="left:2165px;top:1400px;width:2px;height:40px;background:#404040"></div>
<div class="t" style="left:2025px;width:60px;text-align:right;top:1409.3px;font-size:24px;color:#8a8a8a;font-family:'Liberation Mono', monospace">535</div>
<div class="b" style="left:2107px;top:1440px;width:2px;height:40px;background:#404040"></div>
<div class="b" style="left:2136px;top:1440px;width:2px;height:40px;background:#404040"></div>
<div class="b" style="left:2165px;top:1440px;width:2px;height:40px;background:#404040"></div>
<div class="t" style="left:2025px;width:60px;text-align:right;top:1449.3px;font-size:24px;color:#8a8a8a;font-family:'Liberation Mono', monospace">536</div>
<div class="t" style="left:2107.0px;top:1450.5px;font-size:24px;color:#d4d4d4;font-weight:400;font-family:'Liberation Mono', monospace;width:983px;overflow:hidden;letter-spacing:0.02px;">      <span style="color:#569cd6">const</span> <span style="color:#d4d4d4">lineHeight</span> <span style="color:#d4d4d4">=</span> <span style="color:#d4d4d4">targetEditor</span><span style="color:#d4d4d4">.</span><span style="color:#d4d4d4">getOption</span><span style="color:#ffd700">(</span></div>
<div class="b" style="left:2107px;top:1480px;width:2px;height:40px;background:#404040"></div>
<div class="b" style="left:2136px;top:1480px;width:2px;height:40px;background:#404040"></div>
<div class="b" style="left:2165px;top:1480px;width:2px;height:40px;background:#404040"></div>
<div class="b" style="left:2193px;top:1480px;width:2px;height:40px;background:#404040"></div>
<div class="t" style="left:2025px;width:60px;text-align:right;top:1489.3px;font-size:24px;color:#8a8a8a;font-family:'Liberation Mono', monospace">537</div>
<div class="t" style="left:2107.0px;top:1490.5px;font-size:24px;color:#d4d4d4;font-weight:400;font-family:'Liberation Mono', monospace;width:983px;overflow:hidden;letter-spacing:0.02px;">        <span style="color:#d4d4d4">monacoInstance</span><span style="color:#d4d4d4">.</span><span style="color:#d4d4d4">editor</span><span style="color:#d4d4d4">.</span><span style="color:#4ec9b0">EditorOption</span><span style="color:#d4d4d4">.</span><span style="color:#d4d4d4">lineHeight</span><span style="color:#d4d4d4">,</span></div>
<div class="b" style="left:2107px;top:1520px;width:2px;height:40px;background:#404040"></div>
<div class="b" style="left:2136px;top:1520px;width:2px;height:40px;background:#404040"></div>
<div class="b" style="left:2165px;top:1520px;width:2px;height:40px;background:#404040"></div>
<div class="t" style="left:2025px;width:60px;text-align:right;top:1529.3px;font-size:24px;color:#8a8a8a;font-family:'Liberation Mono', monospace">538</div>
<div class="t" style="left:2107.0px;top:1530.5px;font-size:24px;color:#d4d4d4;font-weight:400;font-family:'Liberation Mono', monospace;width:983px;overflow:hidden;letter-spacing:0.02px;">      <span style="color:#ffd700">)</span><span style="color:#d4d4d4">;</span></div>
<div class="b" style="left:2107px;top:1600px;width:2px;height:40px;background:#687550"></div>
<div class="b" style="left:2136px;top:1600px;width:2px;height:40px;background:#687550"></div>
<div class="b" style="left:2165px;top:1600px;width:2px;height:40px;background:#687550"></div>
<div class="t" style="left:2025px;width:60px;text-align:right;top:1609.3px;font-size:24px;color:#8a8a8a;font-family:'Liberation Mono', monospace">539</div>
<div class="t" style="left:2107.0px;top:1610.5px;font-size:24px;color:#d4d4d4;font-weight:400;font-family:'Liberation Mono', monospace;width:983px;overflow:hidden;letter-spacing:0.02px;">      <span style="color:#569cd6">const</span> <span style="color:#d4d4d4">lineCount</span> <span style="color:#d4d4d4">=</span> <span style="color:#4ec9b0">Math</span><span style="color:#d4d4d4">.</span><span style="color:#d4d4d4">max</span><span style="color:#ffd700">(</span><span style="color:#b5c0a8">1</span><span style="color:#d4d4d4">,</span> <span style="color:#d4d4d4">model</span><span style="color:#d4d4d4">.</span><span style="color:#d4d4d4">getLineCount</span><span style="color:#a8a8a8">(</span><span style="color:#a8a8a8">)</span><span style="color:#ffd700">)</span><span style="color:#d4d4d4">;</span></div>
<div class="b" style="left:2107px;top:1640px;width:2px;height:40px;background:#404040"></div>
<div class="b" style="left:2136px;top:1640px;width:2px;height:40px;background:#404040"></div>
<div class="b" style="left:2165px;top:1640px;width:2px;height:40px;background:#404040"></div>
<div class="t" style="left:2025px;width:60px;text-align:right;top:1649.3px;font-size:24px;color:#8a8a8a;font-family:'Liberation Mono', monospace">540</div>
<div class="b" style="left:2107px;top:1680px;width:2px;height:40px;background:#404040"></div>
<div class="b" style="left:2136px;top:1680px;width:2px;height:40px;background:#404040"></div>
<div class="b" style="left:2165px;top:1680px;width:2px;height:40px;background:#404040"></div>
<div class="t" style="left:2025px;width:60px;text-align:right;top:1689.3px;font-size:24px;color:#8a8a8a;font-family:'Liberation Mono', monospace">541</div>
<div class="t" style="left:2107.0px;top:1690.5px;font-size:24px;color:#d4d4d4;font-weight:400;font-family:'Liberation Mono', monospace;width:983px;overflow:hidden;letter-spacing:0.02px;">      <span style="color:#569cd6">return</span> <span style="color:#d4d4d4">lineCount</span> <span style="color:#d4d4d4">*</span> <span style="color:#d4d4d4">lineHeight</span><span style="color:#d4d4d4">;</span></div>
<div class="b" style="left:2107px;top:1720px;width:2px;height:40px;background:#404040"></div>
<div class="b" style="left:2136px;top:1720px;width:2px;height:40px;background:#404040"></div>
<div class="t" style="left:2025px;width:60px;text-align:right;top:1729.3px;font-size:24px;color:#8a8a8a;font-family:'Liberation Mono', monospace">542</div>
<div class="t" style="left:2107.0px;top:1730.5px;font-size:24px;color:#d4d4d4;font-weight:400;font-family:'Liberation Mono', monospace;width:983px;overflow:hidden;letter-spacing:0.02px;">    <span style="color:#179fff">}</span><span style="color:#d4d4d4">;</span></div>
<div class="b" style="left:2107px;top:1760px;width:2px;height:40px;background:#404040"></div>
<div class="b" style="left:2136px;top:1760px;width:2px;height:40px;background:#404040"></div>
<div class="t" style="left:2025px;width:60px;text-align:right;top:1769.3px;font-size:24px;color:#8a8a8a;font-family:'Liberation Mono', monospace">543</div>
<div class="b" style="left:2107px;top:1800px;width:2px;height:40px;background:#404040"></div>
<div class="b" style="left:2136px;top:1800px;width:2px;height:40px;background:#404040"></div>
<div class="t" style="left:2025px;width:60px;text-align:right;top:1809.3px;font-size:24px;color:#8a8a8a;font-family:'Liberation Mono', monospace">544</div>
<div class="t" style="left:2107.0px;top:1810.5px;font-size:24px;color:#d4d4d4;font-weight:400;font-family:'Liberation Mono', monospace;width:983px;overflow:hidden;letter-spacing:0.02px;">    <span style="color:#d4d4d4">container</span><span style="color:#d4d4d4">.</span><span style="color:#d4d4d4">style</span><span style="color:#d4d4d4">.</span><span style="color:#d4d4d4">minHeight</span> <span style="color:#d4d4d4">=</span> <span style="color:#ce9178">`</span><span style="color:#179fff">${</span><span style="color:#d4d4d4">targetMinHeight</span><span style="color:#179fff">}</span><span style="color:#ce9178">px</span><span style="color:#ce9178">`</span><span style="color:#d4d4d4">;</span></div>
<div class="b" style="left:2107px;top:1840px;width:2px;height:40px;background:#404040"></div>
<div class="b" style="left:2136px;top:1840px;width:2px;height:40px;background:#404040"></div>
<div class="t" style="left:2025px;width:60px;text-align:right;top:1849.3px;font-size:24px;color:#8a8a8a;font-family:'Liberation Mono', monospace">545</div>
<div class="b" style="left:2107px;top:1880px;width:2px;height:40px;background:#687550"></div>
<div class="b" style="left:2136px;top:1880px;width:2px;height:40px;background:#687550"></div>
<div class="t" style="left:2025px;width:60px;text-align:right;top:1889.3px;font-size:24px;color:#8a8a8a;font-family:'Liberation Mono', monospace">546</div>
<div class="t" style="left:2107.0px;top:1890.5px;font-size:24px;color:#d4d4d4;font-weight:400;font-family:'Liberation Mono', monospace;width:983px;overflow:hidden;letter-spacing:0.02px;">    <span style="color:#569cd6">let</span> <span style="color:#d4d4d4">observe</span><span style="color:#d4d4d4">:</span> <span style="color:#4ec9b0">ResizeObserver</span> <span style="color:#d4d4d4">|</span> <span style="color:#569cd6">null</span> <span style="color:#d4d4d4">=</span> <span style="color:#569cd6">null</span><span style="color:#d4d4d4">;</span></div>
<div class="b" style="left:2107px;top:1920px;width:2px;height:40px;background:#687550"></div>
<div class="b" style="left:2136px;top:1920px;width:2px;height:40px;background:#687550"></div>
<div class="t" style="left:2025px;width:60px;text-align:right;top:1929.3px;font-size:24px;color:#8a8a8a;font-family:'Liberation Mono', monospace">547</div>
<div class="b" style="left:906px;top:303px;width:1104px;height:42px;background:#242426"></div>
<div class="t" style="left:1039.5px;top:307.6px;font-size:27.5px;color:#ececec;font-weight:400;font-family:'Liberation Sans', sans-serif;">485 hidden lines</div>
<div class="t" style="left:1258.5px;top:307.6px;font-size:27.5px;color:#ececec;font-weight:400;font-family:'Liberation Sans', sans-serif;">|</div>
<div class="t" style="left:1316.0px;top:307.6px;font-size:27.5px;color:#ececec;font-weight:400;font-family:'Liberation Sans', sans-serif;">createDiffEditorMount</div>
<div class="t" style="left:1655.5px;top:307.6px;font-size:27.5px;color:#ececec;font-weight:400;font-family:'Liberation Sans', sans-serif;">&lt;function&gt;</div>
<div class="b" style="left:2014px;top:303px;width:1108px;height:42px;background:#242426"></div>
<div class="t" style="left:2105.5px;top:307.6px;font-size:27.5px;color:#ececec;font-weight:400;font-family:'Liberation Sans', sans-serif;">485 hidden lines</div>
<div class="t" style="left:2324.5px;top:307.6px;font-size:27.5px;color:#ececec;font-weight:400;font-family:'Liberation Sans', sans-serif;">|</div>
<div class="t" style="left:2382.0px;top:307.6px;font-size:27.5px;color:#ececec;font-weight:400;font-family:'Liberation Sans', sans-serif;">createDiffEditorMount</div>
<div class="t" style="left:2721.5px;top:307.6px;font-size:27.5px;color:#ececec;font-weight:400;font-family:'Liberation Sans', sans-serif;">&lt;function&gt;</div>
<div class="b" style="left:906px;top:665px;width:1104px;height:47px;background:#242426"></div>
<div class="t" style="left:1039.5px;top:675.6px;font-size:27.5px;color:#ececec;font-weight:400;font-family:'Liberation Sans', sans-serif;">26 hidden lines</div>
<div class="b" style="left:2014px;top:665px;width:1108px;height:47px;background:#242426"></div>
<div class="t" style="left:2105.5px;top:675.6px;font-size:27.5px;color:#ececec;font-weight:400;font-family:'Liberation Sans', sans-serif;">26 hidden lines</div>
<div class="b" style="left:2010px;top:303px;width:4px;height:1656px;background:#121212"></div>
<div class="b" style="left:3090px;top:303px;width:32px;height:1656px;background:rgba(255,255,255,0.1);border-left:2px solid rgba(255,255,255,0.3);border-right:2px solid rgba(255,255,255,0.22);border-bottom-right-radius:12px"></div>
<div class="b" style="left:3094px;top:303px;width:1px;height:1656px;background:repeating-linear-gradient(180deg,rgba(120,120,140,0.6) 0 2px,transparent 2px 4px)"></div>
<div class="b" style="left:3092px;top:352px;width:28px;height:4px;background:#8c8c8c"></div>
<div class="b" style="left:1986px;top:345px;width:1px;height:1614px;background:repeating-linear-gradient(180deg,#3a3a3a 0 2px,transparent 2px 5px)"></div>
<div class="b" style="left:1987px;top:352px;width:23px;height:4px;background:#8c8c8c"></div>
<div class="b" style="left:2000px;top:1281px;width:10px;height:40px;background:#5a2020"></div>
<div class="b" style="left:2000px;top:1561px;width:10px;height:80px;background:#7a2020"></div>
<svg style="left:0;top:0" width="3248" height="2120"><g transform="translate(936.00,158.30) scale(1.0000)" fill="none" stroke="#cfcfcf" stroke-width="1.900" stroke-linecap="round" stroke-linejoin="round"><line x1="6" x2="6" y1="3" y2="15"/><circle cx="18" cy="6" r="3"/><circle cx="6" cy="18" r="3"/><path d="M18 9a9 9 0 0 1-9 9"/></g><g transform="translate(2150.00,157.00) scale(1.0000)" fill="none" stroke="#d0d0d0" stroke-width="2.000" stroke-linecap="round" stroke-linejoin="round"><path d="m6 9 6 6 6-6"/></g><g transform="translate(934.50,261.50) scale(1.0000)" fill="none" stroke="#9a9a9a" stroke-width="2.000" stroke-linecap="round" stroke-linejoin="round"><path d="m6 9 6 6 6-6"/></g><g transform="translate(973.00,262.00) scale(1.0833)" fill="none" stroke="#f2c21b" stroke-width="2.031" stroke-linecap="round" stroke-linejoin="round"><path d="M12.5 22H18a2 2 0 0 0 2-2V7l-5-5H6a2 2 0 0 0-2 2v9.5"/><path d="M14 2v4a2 2 0 0 0 2 2h4"/><path d="M13.378 15.626a1 1 0 1 0-3.004-3.004l-5.01 5.012a2 2 0 0 0-.506.854l-.837 2.87a.5.5 0 0 0 .62.62l2.87-.837a2 2 0 0 0 .854-.506z"/></g><g transform="translate(2224.00,134.00) scale(1.0000)" fill="none" stroke="#ffffff" stroke-width="2.100" stroke-linecap="round" stroke-linejoin="round"><circle cx="18" cy="18" r="3"/><circle cx="6" cy="6" r="3"/><path d="M6 21V9a9 9 0 0 0 9 9"/></g><g transform="translate(2519.50,132.00) scale(1.0833)" fill="none" stroke="#ffffff" stroke-width="2.123" stroke-linecap="round" stroke-linejoin="round"><path d="m6 9 6 6 6-6"/></g><g transform="translate(2606.00,133.00) scale(1.0833)" fill="none" stroke="#e6e6e6" stroke-width="2.123" stroke-linecap="round" stroke-linejoin="round"><path d="M15 3h6v6"/><path d="M10 14 21 3"/><path d="M18 13v6a2 2 0 0 1-2 2H5a2 2 0 0 1-2-2V8a2 2 0 0 1 2-2h6"/></g><g transform="translate(2807.00,131.50) scale(1.1667)" fill="none" stroke="#e6e6e6" stroke-width="1.971" stroke-linecap="round" stroke-linejoin="round"><path d="m18 16 4-4-4-4"/><path d="m6 8-4 4 4 4"/><path d="m14.5 4-5 16"/></g><g transform="translate(2988.50,132.50) scale(1.0833)" fill="none" stroke="#e6e6e6" stroke-width="2.123" stroke-linecap="round" stroke-linejoin="round"><path d="m6 9 6 6 6-6"/></g><circle cx="3072" cy="137.7" r="2.6" fill="#bdbdbd"/><circle cx="3072" cy="146" r="2.6" fill="#bdbdbd"/><circle cx="3072" cy="154.2" r="2.6" fill="#bdbdbd"/><path d="M1021.0 1301 H1040.0" stroke="#c4c4c4" stroke-width="1.6"/><path d="M1021.0 1581 H1040.0" stroke="#c4c4c4" stroke-width="1.6"/><path d="M1021.0 1621 H1040.0" stroke="#c4c4c4" stroke-width="1.6"/><path d="M2087.5 493 H2105.5 M2096.5 484 V502" stroke="#c4c4c4" stroke-width="1.6"/><path d="M2087.5 900 H2105.5 M2096.5 891 V909" stroke="#c4c4c4" stroke-width="1.6"/><path d="M2087.5 940 H2105.5 M2096.5 931 V949" stroke="#c4c4c4" stroke-width="1.6"/><path d="M2087.5 980 H2105.5 M2096.5 971 V989" stroke="#c4c4c4" stroke-width="1.6"/><path d="M2087.5 1020 H2105.5 M2096.5 1011 V1029" stroke="#c4c4c4" stroke-width="1.6"/><path d="M2087.5 1060 H2105.5 M2096.5 1051 V1069" stroke="#c4c4c4" stroke-width="1.6"/><path d="M2087.5 1100 H2105.5 M2096.5 1091 V1109" stroke="#c4c4c4" stroke-width="1.6"/><path d="M2087.5 1140 H2105.5 M2096.5 1131 V1149" stroke="#c4c4c4" stroke-width="1.6"/><path d="M2087.5 1180 H2105.5 M2096.5 1171 V1189" stroke="#c4c4c4" stroke-width="1.6"/><path d="M2087.5 1220 H2105.5 M2096.5 1211 V1229" stroke="#c4c4c4" stroke-width="1.6"/><path d="M2087.5 1300 H2105.5 M2096.5 1291 V1309" stroke="#c4c4c4" stroke-width="1.6"/><path d="M2087.5 1620 H2105.5 M2096.5 1611 V1629" stroke="#c4c4c4" stroke-width="1.6"/><path d="M2087.5 1900 H2105.5 M2096.5 1891 V1909" stroke="#c4c4c4" stroke-width="1.6"/><path d="M2087.5 1940 H2105.5 M2096.5 1931 V1949" stroke="#c4c4c4" stroke-width="1.6"/><path d="M970.3 315.3 H962.2 L970.3 322 H977.0 L985.0 315.3 H977.0 M970.3 328.9 H962.2 L970.3 322 M977.0 322 L985.0 328.9 H977.0" fill="none" stroke="#eaeaea" stroke-width="2.3" stroke-linejoin="round" stroke-linecap="round"/><path d="M973.5 318.7 V308.3 M969.7 311.8 L973.5 308.3 L977.2 311.8 M973.5 325.7 V335.8 M969.7 332.5 L973.5 335.8 L977.2 332.5" fill="none" stroke="#eaeaea" stroke-width="2.3" stroke-linecap="round" stroke-linejoin="round"/><g transform="translate(1280.00,308.00) scale(1.0833)" fill="none" stroke="#cfcfcf" stroke-width="1.754" stroke-linecap="round" stroke-linejoin="round"><path d="M21 8a2 2 0 0 0-1-1.73l-7-4a2 2 0 0 0-2 0l-7 4A2 2 0 0 0 3 8v8a2 2 0 0 0 1 1.73l7 4a2 2 0 0 0 2 0l7-4A2 2 0 0 0 21 16Z"/><path d="m3.3 7 8.7 5 8.7-5"/><path d="M12 22V12"/></g><g transform="translate(1587.50,308.00) scale(1.0833)" fill="none" stroke="#dcdcdc" stroke-width="1.754" stroke-linecap="round" stroke-linejoin="round"><path d="m9 18 6-6-6-6"/></g><g transform="translate(1620.00,308.00) scale(1.0833)" fill="none" stroke="#cfcfcf" stroke-width="1.754" stroke-linecap="round" stroke-linejoin="round"><path d="M21 8a2 2 0 0 0-1-1.73l-7-4a2 2 0 0 0-2 0l-7 4A2 2 0 0 0 3 8v8a2 2 0 0 0 1 1.73l7 4a2 2 0 0 0 2 0l7-4A2 2 0 0 0 21 16Z"/><path d="m3.3 7 8.7 5 8.7-5"/><path d="M12 22V12"/></g><path d="M2056.3 315.3 H2048.2 L2056.3 322 H2063.0 L2071.0 315.3 H2063.0 M2056.3 328.9 H2048.2 L2056.3 322 M2063.0 322 L2071.0 328.9 H2063.0" fill="none" stroke="#eaeaea" stroke-width="2.3" stroke-linejoin="round" stroke-linecap="round"/><path d="M2059.5 318.7 V308.3 M2055.7 311.8 L2059.5 308.3 L2063.2 311.8 M2059.5 325.7 V335.8 M2055.7 332.5 L2059.5 335.8 L2063.2 332.5" fill="none" stroke="#eaeaea" stroke-width="2.3" stroke-linecap="round" stroke-linejoin="round"/><g transform="translate(2346.00,308.00) scale(1.0833)" fill="none" stroke="#cfcfcf" stroke-width="1.754" stroke-linecap="round" stroke-linejoin="round"><path d="M21 8a2 2 0 0 0-1-1.73l-7-4a2 2 0 0 0-2 0l-7 4A2 2 0 0 0 3 8v8a2 2 0 0 0 1 1.73l7 4a2 2 0 0 0 2 0l7-4A2 2 0 0 0 21 16Z"/><path d="m3.3 7 8.7 5 8.7-5"/><path d="M12 22V12"/></g><g transform="translate(2653.50,308.00) scale(1.0833)" fill="none" stroke="#dcdcdc" stroke-width="1.754" stroke-linecap="round" stroke-linejoin="round"><path d="m9 18 6-6-6-6"/></g><g transform="translate(2686.00,308.00) scale(1.0833)" fill="none" stroke="#cfcfcf" stroke-width="1.754" stroke-linecap="round" stroke-linejoin="round"><path d="M21 8a2 2 0 0 0-1-1.73l-7-4a2 2 0 0 0-2 0l-7 4A2 2 0 0 0 3 8v8a2 2 0 0 0 1 1.73l7 4a2 2 0 0 0 2 0l7-4A2 2 0 0 0 21 16Z"/><path d="m3.3 7 8.7 5 8.7-5"/><path d="M12 22V12"/></g><path d="M970.3 683.3 H962.2 L970.3 690 H977.0 L985.0 683.3 H977.0 M970.3 696.9 H962.2 L970.3 690 M977.0 690 L985.0 696.9 H977.0" fill="none" stroke="#eaeaea" stroke-width="2.3" stroke-linejoin="round" stroke-linecap="round"/><path d="M973.5 686.7 V676.3 M969.7 679.8 L973.5 676.3 L977.2 679.8 M973.5 693.7 V703.8 M969.7 700.5 L973.5 703.8 L977.2 700.5" fill="none" stroke="#eaeaea" stroke-width="2.3" stroke-linecap="round" stroke-linejoin="round"/><path d="M2056.3 683.3 H2048.2 L2056.3 690 H2063.0 L2071.0 683.3 H2063.0 M2056.3 696.9 H2048.2 L2056.3 690 M2063.0 690 L2071.0 696.9 H2063.0" fill="none" stroke="#eaeaea" stroke-width="2.3" stroke-linejoin="round" stroke-linecap="round"/><path d="M2059.5 686.7 V676.3 M2055.7 679.8 L2059.5 676.3 L2063.2 679.8 M2059.5 693.7 V703.8 M2055.7 700.5 L2059.5 703.8 L2063.2 700.5" fill="none" stroke="#eaeaea" stroke-width="2.3" stroke-linecap="round" stroke-linejoin="round"/></svg>
<div class="b" style="left:1345px;top:1744.5px;width:1340px;height:183.5px;background:#0b0b0b;border-radius:34px;box-shadow:0 0 0 1px #151515"></div>
<div class="t" style="left:1374.5px;top:1780.0px;font-size:33px;color:#878787;font-weight:400;font-family:'Liberation Sans', sans-serif;">Add updated instructions or context...</div>
<div class="b" style="left:1373px;top:1853px;width:80px;height:47px;background:#3a3a3a;border-radius:24px"></div>
<div class="b" style="left:1380.5px;top:1860px;width:32.0px;height:32px;background:#f4f4f4;border-radius:50%"></div>
<div class="t" style="left:1473.7px;top:1863.8px;font-size:25.7px;color:#d2d2d2;font-weight:400;font-family:'Liberation Sans', sans-serif;">Original prompt included</div>
<div class="b" style="left:2450px;top:1848px;width:207px;height:56px;background:#045aa3;border-radius:16px"></div>
<div class="t" style="left:2474.0px;top:1862.0px;font-size:28.2px;color:#f8f8f8;font-weight:400;font-family:'Liberation Sans', sans-serif;letter-spacing:0.45px">Restart task</div></body></html>
